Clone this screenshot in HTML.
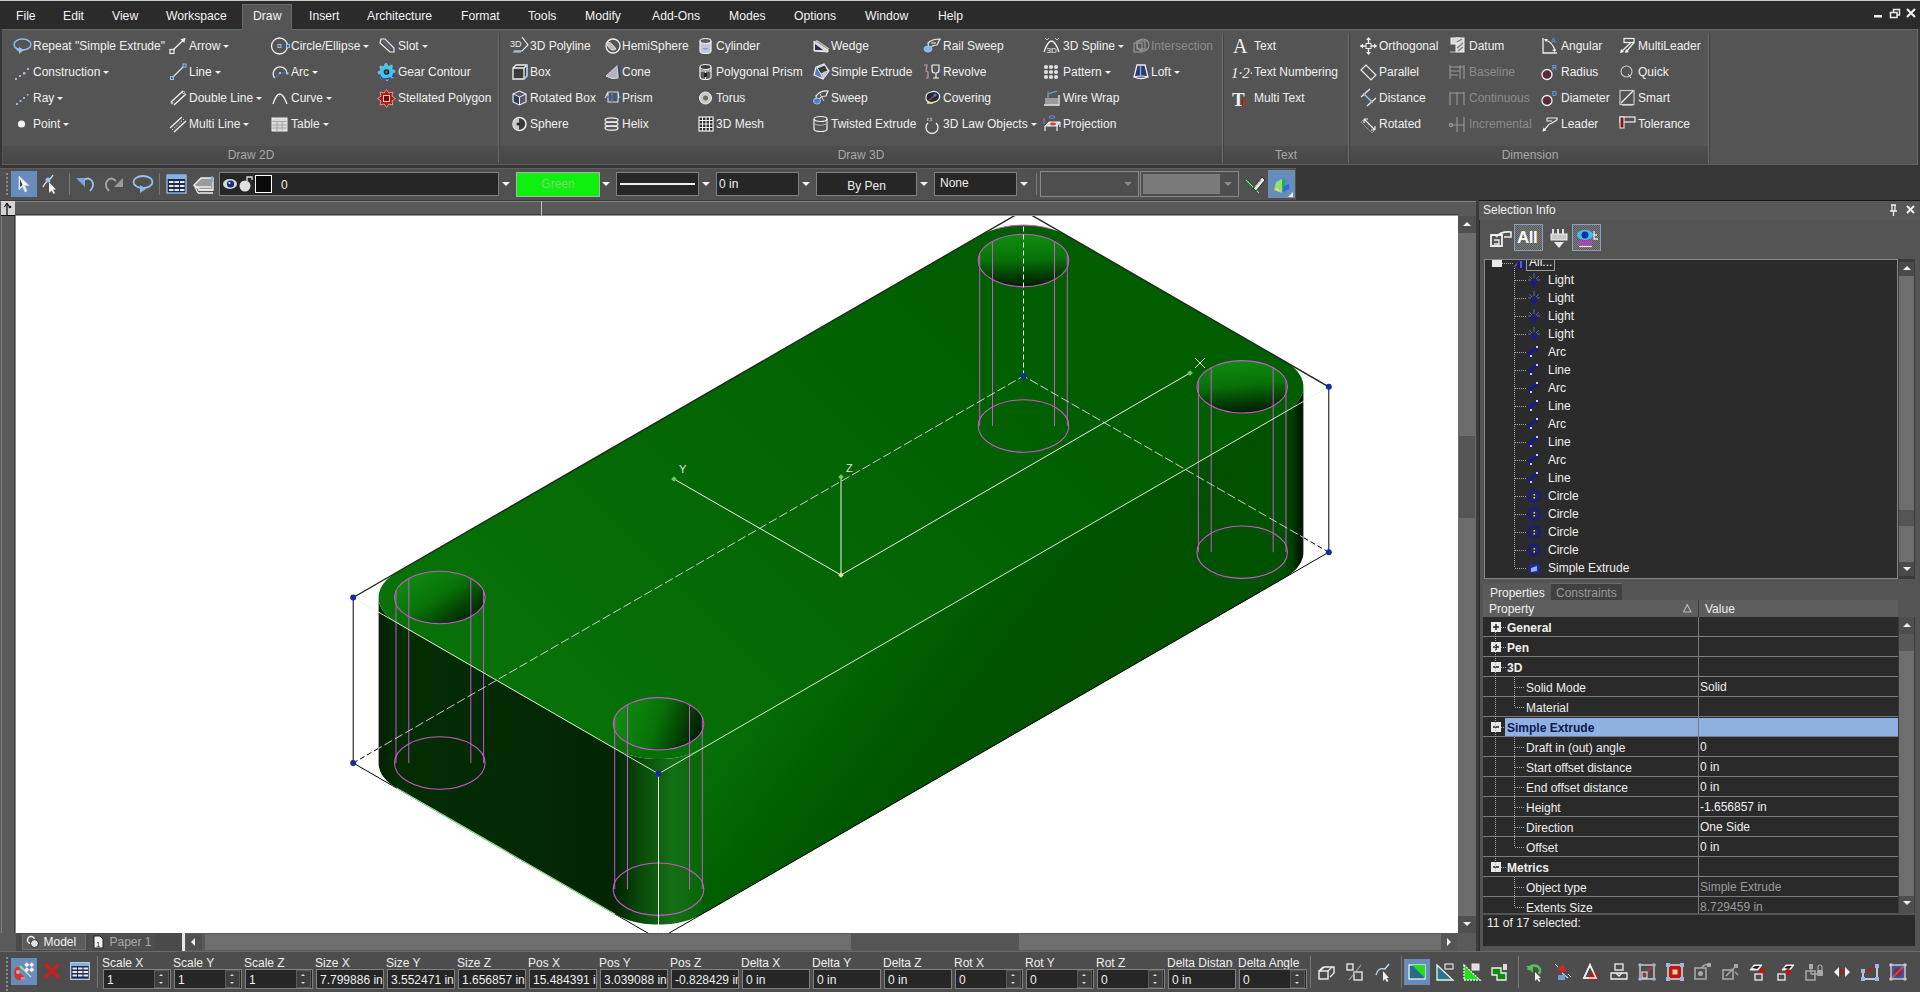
<!DOCTYPE html>
<html><head><meta charset="utf-8"><style>
html,body{margin:0;padding:0}
body{width:1920px;height:992px;overflow:hidden;position:relative;background:#3c3c3c;font-family:"Liberation Sans",sans-serif;}
body div, body svg, body span{position:absolute}
.t{white-space:nowrap;line-height:1}
.dd{width:0;height:0}
.tri{width:0;height:0;border-left:4px solid transparent;border-right:4px solid transparent;border-top:4px solid #f0f0f0}
.tri.s{border-left-width:3px;border-right-width:3px;border-top-width:3px}
.tri.up{border-top:none;border-bottom:4px solid #f0f0f0}
.tri.up.s{border-bottom-width:3px}
</style></head><body>
<div style="left:0px;top:0px;width:1920px;height:992px;background:#363636;"></div>
<div style="left:0px;top:0px;width:1920px;height:29px;background:#2b2b2b;"></div>
<div style="left:0px;top:0px;width:1920px;height:1px;background:#c8c8c8;"></div>
<div style="left:242px;top:4px;width:50px;height:25px;background:#555555;border:1px solid #6a6a6a;border-bottom:none;box-sizing:border-box;"></div>
<span class="t" style="left:16px;top:9.7px;font-size:12.2px;color:#f2f2f2;">File</span>
<span class="t" style="left:63px;top:9.7px;font-size:12.2px;color:#f2f2f2;">Edit</span>
<span class="t" style="left:112px;top:9.7px;font-size:12.2px;color:#f2f2f2;">View</span>
<span class="t" style="left:166px;top:9.7px;font-size:12.2px;color:#f2f2f2;">Workspace</span>
<span class="t" style="left:253px;top:9.7px;font-size:12.2px;color:#f2f2f2;">Draw</span>
<span class="t" style="left:309px;top:9.7px;font-size:12.2px;color:#f2f2f2;">Insert</span>
<span class="t" style="left:367px;top:9.7px;font-size:12.2px;color:#f2f2f2;">Architecture</span>
<span class="t" style="left:461px;top:9.7px;font-size:12.2px;color:#f2f2f2;">Format</span>
<span class="t" style="left:528px;top:9.7px;font-size:12.2px;color:#f2f2f2;">Tools</span>
<span class="t" style="left:585px;top:9.7px;font-size:12.2px;color:#f2f2f2;">Modify</span>
<span class="t" style="left:652px;top:9.7px;font-size:12.2px;color:#f2f2f2;">Add-Ons</span>
<span class="t" style="left:729px;top:9.7px;font-size:12.2px;color:#f2f2f2;">Modes</span>
<span class="t" style="left:794px;top:9.7px;font-size:12.2px;color:#f2f2f2;">Options</span>
<span class="t" style="left:865px;top:9.7px;font-size:12.2px;color:#f2f2f2;">Window</span>
<span class="t" style="left:938px;top:9.7px;font-size:12.2px;color:#f2f2f2;">Help</span>
<svg style="left:1870px;top:6px;" width="50" height="16" viewBox="0 0 50 16"><rect x="4" y="9" width="8" height="2.5" fill="#eee"/><path d="M23.5 6 V3.5 H29.5 V9 H27" fill="none" stroke="#eee" stroke-width="1.4"/><rect x="20.5" y="6.5" width="6.5" height="5" fill="none" stroke="#eee" stroke-width="1.5"/><path d="M37 3 l8 8 M45 3 l-8 8" stroke="#eee" stroke-width="2.2"/></svg>
<div style="left:2px;top:29px;width:1915px;height:135px;background:#545454;border-top:1px solid #6a6a6a;box-sizing:border-box;"></div>
<div style="left:3px;top:146px;width:1705px;height:18px;background:linear-gradient(#4e4e4e,#474747);"></div>
<div style="left:1917px;top:29px;width:1px;height:136px;background:#6a6a6a;"></div>
<div style="left:2px;top:164px;width:1916px;height:1px;background:#5e5e5e;"></div>
<div style="left:243px;top:28px;width:48px;height:3px;background:#555555;"></div>
<div style="left:498px;top:33px;width:1px;height:130px;background:#6c6c6c;"></div>
<div style="left:499px;top:33px;width:1px;height:130px;background:#424242;"></div>
<div style="left:1222px;top:33px;width:1px;height:130px;background:#6c6c6c;"></div>
<div style="left:1223px;top:33px;width:1px;height:130px;background:#424242;"></div>
<div style="left:1348px;top:33px;width:1px;height:130px;background:#6c6c6c;"></div>
<div style="left:1349px;top:33px;width:1px;height:130px;background:#424242;"></div>
<div style="left:1708px;top:33px;width:1px;height:130px;background:#6c6c6c;"></div>
<div style="left:1709px;top:33px;width:1px;height:130px;background:#424242;"></div>
<span class="t" style="left:191px;width:120px;text-align:center;top:149.3px;font-size:12px;color:#a8a8a8">Draw 2D</span>
<span class="t" style="left:801px;width:120px;text-align:center;top:149.3px;font-size:12px;color:#a8a8a8">Draw 3D</span>
<span class="t" style="left:1226px;width:120px;text-align:center;top:149.3px;font-size:12px;color:#a8a8a8">Text</span>
<span class="t" style="left:1470px;width:120px;text-align:center;top:149.3px;font-size:12px;color:#a8a8a8">Dimension</span>
<div style="left:0px;top:165px;width:1920px;height:3px;background:#363636;"></div>
<!--RIBBON-->
<span class="t" style="left:33px;top:40.3px;font-size:12px;color:#f0f0f0;">Repeat &quot;Simple Extrude&quot;</span>
<svg style="left:12px;top:36px;" width="20" height="20" viewBox="0 0 20 20"><ellipse cx="10.5" cy="8.5" rx="8.5" ry="5.5" fill="none" stroke="#9cc0ec" stroke-width="1.4"/><path d="M7 11 l5 3 l-5 4 z" fill="#9cc0ec"/><path d="M4 12 q2 3 4 3" stroke="#9cc0ec" stroke-width="1.4" fill="none"/></svg>
<span class="t" style="left:33px;top:66.3px;font-size:12px;color:#f0f0f0;">Construction</span>
<span class="tri s" style="left:103px;top:71px"></span>
<svg style="left:12px;top:62px;" width="20" height="20" viewBox="0 0 20 20"><g fill="#aab4d0"><rect x="3" y="16" width="2" height="2"/><rect x="7" y="13" width="2" height="2"/><rect x="11" y="10" width="2.5" height="2.5"/><rect x="15" y="6" width="2" height="2"/></g></svg>
<span class="t" style="left:33px;top:92.3px;font-size:12px;color:#f0f0f0;">Ray</span>
<span class="tri s" style="left:57px;top:97px"></span>
<svg style="left:12px;top:88px;" width="20" height="20" viewBox="0 0 20 20"><circle cx="7" cy="13" r="5.5" fill="none" stroke="#4a5470" stroke-width="1"/><g fill="#aab4d0"><rect x="4" y="15" width="2" height="2"/><rect x="7.5" y="12" width="2" height="2"/><rect x="11" y="9" width="2" height="2"/><rect x="15" y="6" width="1.5" height="1.5"/></g></svg>
<span class="t" style="left:33px;top:118.3px;font-size:12px;color:#f0f0f0;">Point</span>
<span class="tri s" style="left:63px;top:123px"></span>
<svg style="left:12px;top:114px;" width="20" height="20" viewBox="0 0 20 20"><circle cx="9.5" cy="10" r="3.6" fill="#f4f4f4"/></svg>
<span class="t" style="left:189px;top:40.3px;font-size:12px;color:#f0f0f0;">Arrow</span>
<span class="tri s" style="left:223px;top:45px"></span>
<svg style="left:168px;top:36px;" width="20" height="20" viewBox="0 0 20 20"><path d="M5 14 L17 2.5" stroke="#f0f0f0" stroke-width="1.3"/><path d="M17.5 2 l-5 1.2 l3.8 3.8 z" fill="#f0f0f0"/><rect x="2" y="13.5" width="4" height="4" fill="none" stroke="#f0f0f0" stroke-width="1.2"/></svg>
<span class="t" style="left:189px;top:66.3px;font-size:12px;color:#f0f0f0;">Line</span>
<span class="tri s" style="left:215px;top:71px"></span>
<svg style="left:168px;top:62px;" width="20" height="20" viewBox="0 0 20 20"><path d="M4.5 15.5 L16.5 3.5" stroke="#d8e4f4" stroke-width="1.3"/><rect x="2.5" y="14.5" width="3" height="3" fill="none" stroke="#9cc0ec" stroke-width="1"/><rect x="15" y="2" width="3" height="3" fill="#3a5aa0" stroke="#9cc0ec" stroke-width="1"/></svg>
<span class="t" style="left:189px;top:92.3px;font-size:12px;color:#f0f0f0;">Double Line</span>
<span class="tri s" style="left:256px;top:97px"></span>
<svg style="left:168px;top:88px;" width="20" height="20" viewBox="0 0 20 20"><path d="M3 14 L15 3 M6 17 L18 6" stroke="#f0f0f0" stroke-width="1.3"/><circle cx="15.5" cy="4.5" r="1.2" fill="none" stroke="#f0f0f0" stroke-width="0.8"/><circle cx="4" cy="15" r="1" fill="none" stroke="#f0f0f0" stroke-width="0.8"/></svg>
<span class="t" style="left:189px;top:118.3px;font-size:12px;color:#f0f0f0;">Multi Line</span>
<span class="tri s" style="left:243px;top:123px"></span>
<svg style="left:168px;top:114px;" width="20" height="20" viewBox="0 0 20 20"><path d="M2 14 L14 3 M6 18 L18 7" stroke="#f0f0f0" stroke-width="1.3"/><path d="M4 16 L16 5" stroke="#f0f0f0" stroke-width="1" stroke-dasharray="1.5,1.5"/></svg>
<span class="t" style="left:291px;top:40.3px;font-size:12px;color:#f0f0f0;">Circle/Ellipse</span>
<span class="tri s" style="left:363px;top:45px"></span>
<svg style="left:270px;top:36px;" width="20" height="20" viewBox="0 0 20 20"><circle cx="9.5" cy="10" r="8" fill="none" stroke="#f0f0f0" stroke-width="1.3"/><rect x="8" y="8.5" width="3" height="3" fill="none" stroke="#9cc0ec" stroke-width="1"/><rect x="16.5" y="8.5" width="3" height="3" fill="#3a5aa0" stroke="#9cc0ec" stroke-width="1"/></svg>
<span class="t" style="left:291px;top:66.3px;font-size:12px;color:#f0f0f0;">Arc</span>
<span class="tri s" style="left:312px;top:71px"></span>
<svg style="left:270px;top:62px;" width="20" height="20" viewBox="0 0 20 20"><path d="M4.5 16 A7 7 0 1 1 17 10.5" fill="none" stroke="#f0f0f0" stroke-width="1.3"/><path d="M5 16 L10 11 L17 11" stroke="#5a6ea0" stroke-width="1.2" fill="none"/><rect x="9" y="10" width="2" height="2" fill="#9cc0ec"/><rect x="16" y="10" width="2.5" height="2.5" fill="#9cc0ec"/></svg>
<span class="t" style="left:291px;top:92.3px;font-size:12px;color:#f0f0f0;">Curve</span>
<span class="tri s" style="left:326px;top:97px"></span>
<svg style="left:270px;top:88px;" width="20" height="20" viewBox="0 0 20 20"><path d="M3 16 Q9.5 -4 17 16" fill="none" stroke="#f0f0f0" stroke-width="1.3"/><rect x="8" y="7" width="2" height="2" fill="#5a6ea0"/></svg>
<span class="t" style="left:291px;top:118.3px;font-size:12px;color:#f0f0f0;">Table</span>
<span class="tri s" style="left:323px;top:123px"></span>
<svg style="left:270px;top:114px;" width="20" height="20" viewBox="0 0 20 20"><rect x="2" y="4" width="15" height="13" fill="#d8d8d8" stroke="#f0f0f0" stroke-width="1"/><path d="M2 7.5 H17 M2 11 H17 M2 14 H17 M7 7 V17 M12 7 V17" stroke="#a0a0a0" stroke-width="0.8"/></svg>
<span class="t" style="left:398px;top:40.3px;font-size:12px;color:#f0f0f0;">Slot</span>
<span class="tri s" style="left:422px;top:45px"></span>
<svg style="left:377px;top:36px;" width="20" height="20" viewBox="0 0 20 20"><path d="M4 3 L8 3 L17 12 L17 16 L13 16 L3 7 Z" fill="none" stroke="#f0f0f0" stroke-width="1.2" transform="rotate(0)"/><path d="M6 5 L14 13" stroke="#6a7aa0" stroke-width="1"/></svg>
<span class="t" style="left:398px;top:66.3px;font-size:12px;color:#f0f0f0;">Gear Contour</span>
<svg style="left:377px;top:62px;" width="20" height="20" viewBox="0 0 20 20"><g transform="translate(9.5 10) rotate(-10)"><polygon points="8.50,0.00 8.34,1.66 5.82,2.41 5.24,3.50 6.01,6.01 4.72,7.07 2.41,5.82 1.23,6.18 0.00,8.50 -1.66,8.34 -2.41,5.82 -3.50,5.24 -6.01,6.01 -7.07,4.72 -5.82,2.41 -6.18,1.23 -8.50,0.00 -8.34,-1.66 -5.82,-2.41 -5.24,-3.50 -6.01,-6.01 -4.72,-7.07 -2.41,-5.82 -1.23,-6.18 -0.00,-8.50 1.66,-8.34 2.41,-5.82 3.50,-5.24 6.01,-6.01 7.07,-4.72 5.82,-2.41 6.18,-1.23" fill="#40c4ec" stroke="#a8d0f8" stroke-width=".5"/><path d="M-6.5 1 A6.5 6.5 0 0 0 6.5 1 L7 6 L-7 6 Z" fill="#1a30b0" opacity=".9"/><circle r="2.8" fill="#222"/><circle r="1.4" fill="#5a6a7a"/></g></svg>
<span class="t" style="left:398px;top:92.3px;font-size:12px;color:#f0f0f0;">Stellated Polygon</span>
<svg style="left:377px;top:88px;" width="20" height="20" viewBox="0 0 20 20"><g transform="translate(9.5 10.5)"><polygon points="0,-9 2.3,-5.5 6.4,-6.4 5.5,-2.3 9,0 5.5,2.3 6.4,6.4 2.3,5.5 0,9 -2.3,5.5 -6.4,6.4 -5.5,2.3 -9,0 -5.5,-2.3 -6.4,-6.4 -2.3,-5.5" fill="#b01818" stroke="#ffb0a0" stroke-width=".8"/><rect x="-3" y="-3" width="6" height="6" fill="#6a1010" stroke="#ffd0c0" stroke-width="1"/></g></svg>
<span class="t" style="left:530px;top:40.3px;font-size:12px;color:#f0f0f0;">3D Polyline</span>
<svg style="left:510px;top:36px;" width="20" height="20" viewBox="0 0 20 20"><text x="0" y="11" font-family="Liberation Sans" font-size="9" fill="#f0f0f0">3D</text><path d="M12 1 L18 9 L12 15 L4 15" fill="none" stroke="#f0f0f0" stroke-width="1.2"/><path d="M3 16 L11 16" stroke="#9cc0ec" stroke-width="1.2"/></svg>
<span class="t" style="left:530px;top:66.3px;font-size:12px;color:#f0f0f0;">Box</span>
<svg style="left:510px;top:62px;" width="20" height="20" viewBox="0 0 20 20"><path d="M3 6 L6 3 L17 3 L17 14 L14 17 L3 17 Z M3 6 H14 V17 M14 6 L17 3" fill="#3a3a3a" stroke="#f0f0f0" stroke-width="1.3"/><path d="M17 3 V14 L14 17" stroke="#9cc0ec" stroke-width="1.3" fill="none"/></svg>
<span class="t" style="left:530px;top:92.3px;font-size:12px;color:#f0f0f0;">Rotated Box</span>
<svg style="left:510px;top:88px;" width="20" height="20" viewBox="0 0 20 20"><path d="M9.5 3 L16 6 L16 14 L9.5 17 L3 14 L3 6 Z" fill="#555a66" stroke="#f0f0f0" stroke-width="1.1"/><path d="M3 6 L9.5 9 L16 6 M9.5 9 V17" stroke="#f0f0f0" stroke-width="1" fill="none"/><path d="M4 7 L9 9.5 L9 16 L4 13.5 Z" fill="#2a3a60"/></svg>
<span class="t" style="left:530px;top:118.3px;font-size:12px;color:#f0f0f0;">Sphere</span>
<svg style="left:510px;top:114px;" width="20" height="20" viewBox="0 0 20 20"><circle cx="9.5" cy="10" r="6.5" fill="#3a3a3a" stroke="#f0f0f0" stroke-width="1.5"/><path d="M9 4 A6 6 0 0 0 9 16" fill="#c8c8c8"/><circle cx="8" cy="10" r="1.5" fill="#222"/></svg>
<span class="t" style="left:622px;top:40.3px;font-size:12px;color:#f0f0f0;">HemiSphere</span>
<svg style="left:602px;top:36px;" width="20" height="20" viewBox="0 0 20 20"><circle cx="11" cy="10" r="7" fill="none" stroke="#f0f0f0" stroke-width="1.3"/><path d="M4 7 Q8 4 14 13 Q9 17 4 7 Z" fill="#b8b8b8" stroke="#f0f0f0" stroke-width=".8"/></svg>
<span class="t" style="left:622px;top:66.3px;font-size:12px;color:#f0f0f0;">Cone</span>
<svg style="left:602px;top:62px;" width="20" height="20" viewBox="0 0 20 20"><path d="M16 3 L16 16 Q10 18 4 14 Z" fill="#b0b4bc" stroke="#d8dce4" stroke-width="1"/><path d="M16 3 L18 16" stroke="#2a3a60" stroke-width="1.2"/></svg>
<span class="t" style="left:622px;top:92.3px;font-size:12px;color:#f0f0f0;">Prism</span>
<svg style="left:602px;top:88px;" width="20" height="20" viewBox="0 0 20 20"><path d="M6 4 L16 4 L16 14 L6 14 Z M6 4 L3 10 M16 4 L17 10" fill="none" stroke="#d8e0f0" stroke-width="1.1"/><path d="M10 4 V14" stroke="#5a7ac0" stroke-width="1.4"/><path d="M5 9 H16" stroke="#3a5aa0" stroke-width="1"/></svg>
<span class="t" style="left:622px;top:118.3px;font-size:12px;color:#f0f0f0;">Helix</span>
<svg style="left:602px;top:114px;" width="20" height="20" viewBox="0 0 20 20"><g fill="none" stroke="#f0f0f0" stroke-width="1.3"><ellipse cx="9.5" cy="6" rx="6.5" ry="2.2"/><ellipse cx="9.5" cy="10" rx="6.5" ry="2.2"/><ellipse cx="9.5" cy="14" rx="6.5" ry="2.2"/></g></svg>
<span class="t" style="left:716px;top:40.3px;font-size:12px;color:#f0f0f0;">Cylinder</span>
<svg style="left:696px;top:36px;" width="20" height="20" viewBox="0 0 20 20"><path d="M4 5 V15 A5.5 2.5 0 0 0 15 15 V5" fill="#c0c8d8" stroke="#f0f0f0" stroke-width="1.2"/><ellipse cx="9.5" cy="5" rx="5.5" ry="2.5" fill="#5a5a5a" stroke="#f0f0f0" stroke-width="1.2"/><path d="M6 12 Q9 16 13 12" fill="#8aa8e0"/></svg>
<span class="t" style="left:716px;top:66.3px;font-size:12px;color:#f0f0f0;">Polygonal Prism</span>
<svg style="left:696px;top:62px;" width="20" height="20" viewBox="0 0 20 20"><path d="M4 5 V15 A5.5 2.5 0 0 0 15 15 V5" fill="#5a5a5a" stroke="#f0f0f0" stroke-width="1.2"/><ellipse cx="9.5" cy="5" rx="5.5" ry="2.5" fill="#3a3a3a" stroke="#f0f0f0" stroke-width="1.2"/><path d="M4 9 H15 M9.5 9 V17" stroke="#f0f0f0" stroke-width="1"/><rect x="8" y="11" width="3" height="4" fill="#222"/></svg>
<span class="t" style="left:716px;top:92.3px;font-size:12px;color:#f0f0f0;">Torus</span>
<svg style="left:696px;top:88px;" width="20" height="20" viewBox="0 0 20 20"><circle cx="9.5" cy="10" r="6" fill="#c8c8c8" stroke="#f0f0f0" stroke-width="1"/><circle cx="9.5" cy="10" r="2.5" fill="#6a6a6a"/></svg>
<span class="t" style="left:716px;top:118.3px;font-size:12px;color:#f0f0f0;">3D Mesh</span>
<svg style="left:696px;top:114px;" width="20" height="20" viewBox="0 0 20 20"><rect x="3" y="3" width="14" height="14" fill="#2a2a2a" stroke="#f0f0f0" stroke-width="1.2"/><path d="M3 6.5 H17 M3 10 H17 M3 13.5 H17 M6.5 3 V17 M10 3 V17 M13.5 3 V17" stroke="#f0f0f0" stroke-width="1.1"/></svg>
<span class="t" style="left:831px;top:40.3px;font-size:12px;color:#f0f0f0;">Wedge</span>
<svg style="left:811px;top:36px;" width="20" height="20" viewBox="0 0 20 20"><path d="M3 15 L3 5 L17 14 L17 16 Z" fill="#d8d8d8" stroke="#f0f0f0" stroke-width="1"/><path d="M4 7 L6 5 L18 13" stroke="#c8c8c8" stroke-width="1.5" fill="none"/><path d="M4 8 L4 14 L12 14 Z" fill="#2a2a4a"/></svg>
<span class="t" style="left:831px;top:66.3px;font-size:12px;color:#f0f0f0;">Simple Extrude</span>
<svg style="left:811px;top:62px;" width="20" height="20" viewBox="0 0 20 20"><path d="M5 5 L13 2 L18 9 L12 17 L3 13 Z" fill="#5a7ac0" stroke="#f0f0f0" stroke-width="1.2"/><path d="M6 6 L14 3 L17 9 L10 12 Z" fill="#3a3a3a" stroke="#f0f0f0" stroke-width="1"/><path d="M10 12 L12 17 M17 9 L18 9" stroke="#f0f0f0" stroke-width="1"/><path d="M12 10 L16 9 L14 15 L11 16 Z" fill="#c8c8c8"/></svg>
<span class="t" style="left:831px;top:92.3px;font-size:12px;color:#f0f0f0;">Sweep</span>
<svg style="left:811px;top:88px;" width="20" height="20" viewBox="0 0 20 20"><path d="M5 8 Q10 2 17 3 L15 8 Q9 8 6 14 Z" fill="none" stroke="#f0f0f0" stroke-width="1.2"/><ellipse cx="6" cy="13" rx="3.5" ry="3" fill="#5a7ad0" stroke="#9cc0ec" stroke-width="1"/><path d="M9 6 L13 13" stroke="#d0d0d0" stroke-width="1"/></svg>
<span class="t" style="left:831px;top:118.3px;font-size:12px;color:#f0f0f0;">Twisted Extrude</span>
<svg style="left:811px;top:114px;" width="20" height="20" viewBox="0 0 20 20"><path d="M3 5 V15 A6.5 2.5 0 0 0 16 15 V5" fill="none" stroke="#f0f0f0" stroke-width="1.2"/><ellipse cx="9.5" cy="5" rx="6.5" ry="2.5" fill="none" stroke="#f0f0f0" stroke-width="1.2"/><path d="M3 10 Q9.5 13 16 10" stroke="#b0b0b0" stroke-width="1" fill="none"/></svg>
<span class="t" style="left:943px;top:40.3px;font-size:12px;color:#f0f0f0;">Rail Sweep</span>
<svg style="left:922px;top:36px;" width="20" height="20" viewBox="0 0 20 20"><path d="M6 7 Q10 3 18 3 L15 9 Q10 9 7 13 Z" fill="none" stroke="#f0f0f0" stroke-width="1.2"/><ellipse cx="6" cy="13" rx="4" ry="3" fill="#8ab0e8" stroke="#9cc0ec" stroke-width="1"/><path d="M9 7 L14 7" stroke="#f0f0f0" stroke-width="1"/></svg>
<span class="t" style="left:943px;top:66.3px;font-size:12px;color:#f0f0f0;">Revolve</span>
<svg style="left:922px;top:62px;" width="20" height="20" viewBox="0 0 20 20"><path d="M2 3 H5 L4 9 L6 10 L6 16 L4 16" fill="none" stroke="#c8a0a0" stroke-width="1.1"/><path d="M10 3 H17 V8 Q17 11 14 11 V16 H11 M14 16 H17 M10 3 V8 Q10 11 13 11" fill="none" stroke="#f0f0f0" stroke-width="1.2"/></svg>
<span class="t" style="left:943px;top:92.3px;font-size:12px;color:#f0f0f0;">Covering</span>
<svg style="left:922px;top:88px;" width="20" height="20" viewBox="0 0 20 20"><path d="M4 11 Q3 5 9 4 Q14 2 17 6 Q19 10 15 13 Q9 16 5 13 Z" fill="#2a2a2a" stroke="#f0f0f0" stroke-width="1.2"/><path d="M5 15 L11 15" stroke="#e8e870" stroke-width="1.6"/><path d="M7 12 L14 7" stroke="#8a4a8a" stroke-width="1.2"/><circle cx="13" cy="7" r="1.6" fill="#4a7ae0"/></svg>
<span class="t" style="left:943px;top:118.3px;font-size:12px;color:#f0f0f0;">3D Law Objects</span>
<span class="tri s" style="left:1031px;top:123px"></span>
<svg style="left:922px;top:114px;" width="20" height="20" viewBox="0 0 20 20"><path d="M6 9 A6 6 0 1 0 14 9" fill="none" stroke="#f0f0f0" stroke-width="1.3"/><text x="5" y="7" font-family="Liberation Sans" font-size="6" fill="#f0f0f0">r,t</text></svg>
<span class="t" style="left:1063px;top:40.3px;font-size:12px;color:#f0f0f0;">3D Spline</span>
<span class="tri s" style="left:1118px;top:45px"></span>
<svg style="left:1042px;top:36px;" width="20" height="20" viewBox="0 0 20 20"><path d="M2 16 Q9.5 -6 17 16" fill="none" stroke="#f0f0f0" stroke-width="1.3"/><text x="4.5" y="17" font-family="Liberation Sans" font-size="8" fill="#f0f0f0">3D</text><path d="M3 2 l2 2 l2 -2 M13 2 l2 2 l2 -2" stroke="#c0c0c0" stroke-width="1" fill="none"/></svg>
<span class="t" style="left:1063px;top:66.3px;font-size:12px;color:#f0f0f0;">Pattern</span>
<span class="tri s" style="left:1105px;top:71px"></span>
<svg style="left:1042px;top:62px;" width="20" height="20" viewBox="0 0 20 20"><circle cx="4" cy="5" r="2.1" fill="#e0e0e0"/><circle cx="4" cy="10" r="2.1" fill="#e0e0e0"/><circle cx="4" cy="15" r="2.1" fill="#e0e0e0"/><circle cx="9" cy="5" r="2.1" fill="#e0e0e0"/><circle cx="9" cy="10" r="2.1" fill="#e0e0e0"/><circle cx="9" cy="15" r="2.1" fill="#e0e0e0"/><circle cx="14" cy="5" r="2.1" fill="#e0e0e0"/><circle cx="14" cy="10" r="2.1" fill="#e0e0e0"/><circle cx="14" cy="15" r="2.1" fill="#e0e0e0"/></svg>
<span class="t" style="left:1063px;top:92.3px;font-size:12px;color:#f0f0f0;">Wire Wrap</span>
<svg style="left:1042px;top:88px;" width="20" height="20" viewBox="0 0 20 20"><rect x="3" y="10" width="13" height="6" fill="#9a9a9a"/><path d="M2 17 H17 V7" stroke="#f0f0f0" stroke-width="1.3" fill="none"/><path d="M6 10 V6 L15 3" stroke="#4ac0d0" stroke-width="1.2" fill="none"/><path d="M6 6 L6 3" stroke="#c060c0" stroke-width="1"/></svg>
<span class="t" style="left:1063px;top:118.3px;font-size:12px;color:#f0f0f0;">Projection</span>
<svg style="left:1042px;top:114px;" width="20" height="20" viewBox="0 0 20 20"><path d="M3 12 L7 8 L18 8 L15 12 Z" fill="#d8d8d8" stroke="#f0f0f0" stroke-width="1"/><path d="M3 12 V17 M15 12 V17 M18 8 V13" stroke="#f0f0f0" stroke-width="1.2"/><ellipse cx="11" cy="10" rx="3" ry="1.4" fill="#d04040"/><ellipse cx="10" cy="3" rx="3" ry="1.3" fill="none" stroke="#6a8ad0" stroke-width="1"/><path d="M2 4 V10" stroke="#a0a0c0" stroke-width=".8"/></svg>
<span class="t" style="left:1151px;top:40.3px;font-size:12px;color:#8c8c8c;">Intersection</span>
<svg style="left:1131px;top:36px;" width="20" height="20" viewBox="0 0 20 20"><g fill="none" stroke="#9a9a9a" stroke-width="1.1"><rect x="3" y="7" width="8" height="9"/><rect x="6" y="5" width="8" height="8"/><circle cx="12" cy="9" r="6"/></g></svg>
<span class="t" style="left:1151px;top:66.3px;font-size:12px;color:#f0f0f0;">Loft</span>
<span class="tri s" style="left:1174px;top:71px"></span>
<svg style="left:1131px;top:62px;" width="20" height="20" viewBox="0 0 20 20"><path d="M6 3 H14 L17 15 Q10 18 3 15 Z" fill="#2a3a6a" stroke="#f0f0f0" stroke-width="1.3"/><path d="M3 15 Q10 13 17 15" stroke="#f0f0f0" stroke-width="1.2" fill="none"/><path d="M9.5 4 V15" stroke="#8ab0e0" stroke-width="1.4"/></svg>
<span class="t" style="left:1254px;top:40.3px;font-size:12px;color:#f0f0f0;">Text</span>
<svg style="left:1232px;top:36px;" width="20" height="20" viewBox="0 0 20 20"><text x="1" y="17" font-family="Liberation Serif" font-size="20" fill="#f0f0f0">A</text></svg>
<span class="t" style="left:1254px;top:66.3px;font-size:12px;color:#f0f0f0;">Text Numbering</span>
<svg style="left:1232px;top:62px;" width="20" height="20" viewBox="0 0 20 20"><text x="-1" y="16" font-family="Liberation Serif" font-style="italic" font-size="15" fill="#f0f0f0">1·2·3</text></svg>
<span class="t" style="left:1254px;top:92.3px;font-size:12px;color:#f0f0f0;">Multi Text</span>
<svg style="left:1232px;top:88px;" width="20" height="20" viewBox="0 0 20 20"><text x="0" y="18" font-family="Liberation Serif" font-weight="bold" font-size="19" fill="#f0f0f0">T</text><text x="9" y="19" font-family="Liberation Serif" font-size="16" fill="#c01818">r</text></svg>
<span class="t" style="left:1379px;top:40.3px;font-size:12px;color:#f0f0f0;">Orthogonal</span>
<svg style="left:1359px;top:36px;" width="20" height="20" viewBox="0 0 20 20"><g stroke="#f0f0f0" stroke-width="1.4" fill="none"><path d="M9.5 2 V18 M1.5 10 H17.5"/></g><g fill="#f0f0f0"><path d="M9.5 1 l-2.5 3 h5z M9.5 19 l-2.5 -3 h5z M1 10 l3 -2.5 v5z M18 10 l-3 -2.5 v5z"/></g><rect x="7" y="7.5" width="5" height="5" fill="#555" stroke="#f0f0f0" stroke-width="1"/></svg>
<span class="t" style="left:1379px;top:66.3px;font-size:12px;color:#f0f0f0;">Parallel</span>
<svg style="left:1359px;top:62px;" width="20" height="20" viewBox="0 0 20 20"><path d="M2 8 L7 3 L17 13 L12 18 Z" fill="none" stroke="#f0f0f0" stroke-width="1.2"/></svg>
<span class="t" style="left:1379px;top:92.3px;font-size:12px;color:#f0f0f0;">Distance</span>
<svg style="left:1359px;top:88px;" width="20" height="20" viewBox="0 0 20 20"><path d="M2 9 L11 1 M8 18 L17 10" stroke="#f0f0f0" stroke-width="1.3"/><path d="M5 6 L13 14" stroke="#9cc0ec" stroke-width="1.6"/><path d="M4 5 l3 0 l-2 3z M14 15 l-3 0 l2 -3z" fill="#9cc0ec"/></svg>
<span class="t" style="left:1379px;top:118.3px;font-size:12px;color:#f0f0f0;">Rotated</span>
<svg style="left:1359px;top:114px;" width="20" height="20" viewBox="0 0 20 20"><path d="M5 5 L16 16 M5 5 l0 4 M5 5 l4 0 M16 16 l0 -4 M16 16 l-4 0" stroke="#f0f0f0" stroke-width="1.2" fill="none"/><path d="M2 8 L5 5 M13 19 L16 16" stroke="#9a9a9a" stroke-width="1"/><path d="M2 8 L10 16 L13 19" stroke="#8a8a8a" stroke-width="1" fill="none"/></svg>
<span class="t" style="left:1469px;top:40.3px;font-size:12px;color:#f0f0f0;">Datum</span>
<svg style="left:1448px;top:36px;" width="20" height="20" viewBox="0 0 20 20"><rect x="8" y="2" width="8" height="14" fill="#d8d8d8" stroke="#f0f0f0" stroke-width="1"/><rect x="3" y="2" width="8" height="6" fill="#d8d8d8" stroke="#f0f0f0" stroke-width="1"/><path d="M9 6 L14 3 M9 12 L15 7 M10 15 L15 11" stroke="#7a7a7a" stroke-width="1.2"/><path d="M2 16 H8" stroke="#bbb" stroke-width="1"/></svg>
<span class="t" style="left:1469px;top:66.3px;font-size:12px;color:#8c8c8c;">Baseline</span>
<svg style="left:1448px;top:62px;" width="20" height="20" viewBox="0 0 20 20"><g stroke="#9a9a9a" stroke-width="1.1" fill="none"><path d="M2 3 V17 M16 3 V17 M12 3 V17 M2 5 H16 M2 9 H12 M2 13 H10"/></g></svg>
<span class="t" style="left:1469px;top:92.3px;font-size:12px;color:#8c8c8c;">Continuous</span>
<svg style="left:1448px;top:88px;" width="20" height="20" viewBox="0 0 20 20"><g stroke="#9a9a9a" stroke-width="1.1" fill="none"><path d="M2 4 V17 M9 4 V17 M16 4 V17 M2 5 H16"/></g></svg>
<span class="t" style="left:1469px;top:118.3px;font-size:12px;color:#8c8c8c;">Incremental</span>
<svg style="left:1448px;top:114px;" width="20" height="20" viewBox="0 0 20 20"><g stroke="#9a9a9a" stroke-width="1.1" fill="none"><path d="M9 3 V18 M16 3 V18 M3 11 H16"/><circle cx="3" cy="11" r="1.6"/></g></svg>
<span class="t" style="left:1561px;top:40.3px;font-size:12px;color:#f0f0f0;">Angular</span>
<svg style="left:1540px;top:36px;" width="20" height="20" viewBox="0 0 20 20"><path d="M3 2 V17 H17" stroke="#f0f0f0" stroke-width="1.3" fill="none"/><path d="M5 4 Q13 6 15 15" stroke="#f0f0f0" stroke-width="1.2" fill="none"/><path d="M4 3 l4 0 l-2 3z M15 16 l-3 -2 l4 -1z" fill="#f0f0f0"/><text x="11" y="7" font-family="Liberation Sans" font-size="7" font-weight="bold" fill="#5a8ad0">A</text></svg>
<span class="t" style="left:1561px;top:66.3px;font-size:12px;color:#f0f0f0;">Radius</span>
<svg style="left:1540px;top:62px;" width="20" height="20" viewBox="0 0 20 20"><circle cx="7" cy="12.5" r="5" fill="#5a2a3a" stroke="#f0f0f0" stroke-width="1.3"/><text x="12" y="8" font-family="Liberation Sans" font-size="7" font-weight="bold" fill="#6a9ae0">R</text></svg>
<span class="t" style="left:1561px;top:92.3px;font-size:12px;color:#f0f0f0;">Diameter</span>
<svg style="left:1540px;top:88px;" width="20" height="20" viewBox="0 0 20 20"><circle cx="7" cy="12.5" r="5" fill="#5a2a3a" stroke="#f0f0f0" stroke-width="1.3"/><text x="12" y="8" font-family="Liberation Sans" font-size="7" font-weight="bold" fill="#6a9ae0">D</text></svg>
<span class="t" style="left:1561px;top:118.3px;font-size:12px;color:#f0f0f0;">Leader</span>
<svg style="left:1540px;top:114px;" width="20" height="20" viewBox="0 0 20 20"><path d="M7 4 H17 V6 L12 9 Q8 10 7 13 L3 17" stroke="#f0f0f0" stroke-width="1.2" fill="none"/><path d="M2.5 17.5 l1 -4 l3 3z" fill="#f0f0f0"/><path d="M7 4 V7 H12" stroke="#f0f0f0" stroke-width="1.1" fill="none"/></svg>
<span class="t" style="left:1638px;top:40.3px;font-size:12px;color:#f0f0f0;">MultiLeader</span>
<svg style="left:1617px;top:36px;" width="20" height="20" viewBox="0 0 20 20"><rect x="7" y="2.5" width="10" height="4" fill="none" stroke="#f0f0f0" stroke-width="1.2"/><path d="M14 6.5 L4 16 M17 6.5 L9 16" stroke="#f0f0f0" stroke-width="1.2"/><path d="M3 17 l1 -4 l3 3z M8 17 l1 -4 l3 3z" fill="#f0f0f0"/></svg>
<span class="t" style="left:1638px;top:66.3px;font-size:12px;color:#f0f0f0;">Quick</span>
<svg style="left:1617px;top:62px;" width="20" height="20" viewBox="0 0 20 20"><circle cx="9.5" cy="9.5" r="5.5" fill="none" stroke="#d0d0d0" stroke-width="1.1"/><path d="M11 12 L14 16" stroke="#d0d0d0" stroke-width="1.1"/></svg>
<span class="t" style="left:1638px;top:92.3px;font-size:12px;color:#f0f0f0;">Smart</span>
<svg style="left:1617px;top:88px;" width="20" height="20" viewBox="0 0 20 20"><rect x="3" y="2.5" width="14" height="14" fill="none" stroke="#c8c8c8" stroke-width="1.2"/><path d="M4 15 L16 3" stroke="#f0f0f0" stroke-width="1.3"/><path d="M5 17 H16" stroke="#f0f0f0" stroke-width="1"/></svg>
<span class="t" style="left:1638px;top:118.3px;font-size:12px;color:#f0f0f0;">Tolerance</span>
<svg style="left:1617px;top:114px;" width="20" height="20" viewBox="0 0 20 20"><rect x="3" y="3" width="15" height="5" fill="none" stroke="#f0f0f0" stroke-width="1.2"/><rect x="3" y="3" width="4" height="11" fill="#7a1818" stroke="#f0f0f0" stroke-width="1"/></svg>
<div style="left:0px;top:168px;width:1296px;height:32px;background:#505050;border-top:1px solid #5e5e5e;box-sizing:border-box;"></div>
<!--TOOLBAR-->
<div style="left:6px;top:173px;width:2px;height:2px;background:#8a8a8a;"></div>
<div style="left:6px;top:177px;width:2px;height:2px;background:#8a8a8a;"></div>
<div style="left:6px;top:181px;width:2px;height:2px;background:#8a8a8a;"></div>
<div style="left:6px;top:185px;width:2px;height:2px;background:#8a8a8a;"></div>
<div style="left:6px;top:189px;width:2px;height:2px;background:#8a8a8a;"></div>
<div style="left:6px;top:193px;width:2px;height:2px;background:#8a8a8a;"></div>
<div style="left:11px;top:171px;width:26px;height:26px;background:#6a8cba;"></div>
<svg style="left:13px;top:173px;" width="22" height="22" viewBox="0 0 22 22"><path d="M6 3 L6 17 L9.5 13.5 L12 19 L14 18 L11.5 12.5 L16 12.5 Z" fill="#f4f4f4" stroke="#c8d8f0" stroke-width=".8"/><path d="M7 6 L7 14 L9.5 12" fill="#3a3a3a"/></svg>
<svg style="left:40px;top:173px;" width="22" height="22" viewBox="0 0 22 22"><path d="M3 14 Q6 8 11 5 L13 2" stroke="#e8e8e8" stroke-width="1.3" fill="none"/><circle cx="8" cy="7" r="2.5" fill="#9cc0ec"/><path d="M9 9 L9 20 L11.5 17.5 L13.5 21 L15 20 L13 16.5 L16 16.5 Z" fill="#f4f4f4"/></svg>
<svg style="left:74px;top:174px;" width="22" height="20" viewBox="0 0 22 20"><path d="M9 7 Q14 2 18 7 Q21 12 16 17" stroke="#9cc0ec" stroke-width="1.8" fill="none"/><path d="M2 4 L11 4 L11 13 Z" fill="#7aa8e0"/></svg>
<svg style="left:103px;top:174px;" width="22" height="20" viewBox="0 0 22 20"><path d="M13 7 Q8 2 4 7 Q1 12 6 17" stroke="#a8a8a8" stroke-width="1.8" fill="none"/><path d="M20 4 L11 13 L20 13 Z" fill="#9a9a9a"/></svg>
<svg style="left:131px;top:173px;" width="24" height="22" viewBox="0 0 24 22"><ellipse cx="12" cy="9" rx="9.5" ry="6" stroke="#9cc0ec" stroke-width="1.8" fill="none"/><path d="M9 12 L15 16 L9 20 Z" fill="#8ab8f0"/></svg>
<svg style="left:166px;top:174px;" width="21" height="20" viewBox="0 0 21 20"><rect x="1" y="1" width="19" height="18" fill="#1a2a50" stroke="#9cc0ec" stroke-width="1.3"/><rect x="1" y="1" width="19" height="4" fill="#8ab0e0"/><g fill="#e8e8e8"><rect x="3" y="7" width="4.5" height="2"/><rect x="8.5" y="7" width="4.5" height="2"/><rect x="14" y="7" width="4.5" height="2"/><rect x="3" y="11" width="4.5" height="2"/><rect x="8.5" y="11" width="4.5" height="2"/><rect x="14" y="11" width="4.5" height="2"/><rect x="3" y="15" width="4.5" height="2"/><rect x="8.5" y="15" width="4.5" height="2"/><rect x="14" y="15" width="4.5" height="2"/></g></svg>
<svg style="left:193px;top:174px;" width="22" height="20" viewBox="0 0 22 20"><path d="M1 11 L8 4 L20 4 L20 16 L7 16 Z" fill="#9a9a9a" stroke="#f0f0f0" stroke-width="1.3"/><path d="M3 13 L18 13 M5 16 H20 M5 19 H20 M1 11 L5 19" stroke="#f0f0f0" stroke-width="1.3" fill="none"/><path d="M19 2 V8" stroke="#7aa0d0" stroke-width="1.5"/></svg>
<svg style="left:1242px;top:171px;" width="24" height="26" viewBox="0 0 24 26"><path d="M4 9 L17 22" stroke="#2a8a2a" stroke-width="2.2"/><path d="M4 9 L17 22" stroke="#b8f0b8" stroke-width=".8"/><path d="M11 17 L20 6 L23 9 L14 20 Z" fill="#e8e8e8" stroke="#1a1a1a" stroke-width=".8"/><path d="M12 17 L19 9" stroke="#444" stroke-width="1" stroke-dasharray="1,1"/></svg>
<div style="left:69px;top:173px;width:1px;height:22px;background:#777;"></div>
<div style="left:159px;top:173px;width:1px;height:22px;background:#777;"></div>
<div style="left:219px;top:172px;width:280px;height:24px;background:#262626;border:1px solid #808080;box-sizing:border-box;"></div>
<div style="left:255px;top:175px;width:17px;height:18px;background:#0a0a0a;border:1px solid #fff;box-sizing:border-box;"></div>
<span class="t" style="left:281px;top:178.8px;font-size:12px;color:#eee;">0</span>
<svg style="left:222px;top:176px;" width="16" height="16" viewBox="0 0 16 16"><ellipse cx="8" cy="8" rx="7" ry="5" fill="#d8d8e0"/><circle cx="8.5" cy="8" r="3.6" fill="#1a2a80"/><circle cx="7.5" cy="7" r="1" fill="#fff"/></svg>
<svg style="left:238px;top:175px;" width="16" height="18" viewBox="0 0 16 18"><circle cx="7" cy="11" r="5.5" fill="#e0e0e0"/><path d="M9 6 V2 H14 V5" stroke="#e0e0e0" stroke-width="1.3" fill="none"/></svg>
<span class="tri" style="left:502px;top:182px;border-top-color:#f0f0f0"></span>
<div style="left:516px;top:172px;width:84px;height:25px;background:#0ef00e;border:1px solid #b0b0b0;box-sizing:border-box;"></div>
<span class="t" style="left:516px;width:84px;text-align:center;top:177.8px;font-size:12px;color:#7ad87a">Green</span>
<span class="tri" style="left:602px;top:182px;border-top-color:#f0f0f0"></span>
<div style="left:616px;top:172px;width:83px;height:24px;background:#262626;border:1px solid #808080;box-sizing:border-box;"></div>
<div style="left:620px;top:183px;width:75px;height:1.5px;background:#f0f0f0;"></div>
<span class="tri" style="left:702px;top:182px;border-top-color:#f0f0f0"></span>
<div style="left:716px;top:172px;width:83px;height:24px;background:#262626;border:1px solid #808080;box-sizing:border-box;"></div>
<span class="t" style="left:719px;top:177.8px;font-size:12px;color:#eee;">0 in</span>
<span class="tri" style="left:802px;top:182px;border-top-color:#f0f0f0"></span>
<div style="left:816px;top:172px;width:101px;height:24px;background:#262626;border:1px solid #808080;box-sizing:border-box;"></div>
<span class="t" style="left:816px;width:101px;text-align:center;top:179.8px;font-size:12px;color:#eee">By Pen</span>
<span class="tri" style="left:920px;top:182px;border-top-color:#f0f0f0"></span>
<div style="left:934px;top:172px;width:83px;height:24px;background:#262626;border:1px solid #808080;box-sizing:border-box;"></div>
<span class="t" style="left:940px;top:176.8px;font-size:12px;color:#eee;">None</span>
<span class="tri" style="left:1020px;top:182px;border-top-color:#f0f0f0"></span>
<div style="left:1036px;top:173px;width:1px;height:22px;background:#777;"></div>
<div style="left:1040px;top:171px;width:99px;height:26px;background:#4e4e4e;border:1px solid #8a8a8a;box-sizing:border-box;"></div>
<span class="tri" style="left:1124px;top:182px;border-top-color:#8a8a8a"></span>
<div style="left:1140px;top:171px;width:99px;height:26px;background:#4e4e4e;border:1px solid #8a8a8a;box-sizing:border-box;"></div>
<div style="left:1143px;top:174px;width:77px;height:20px;background:#7a7a7a;"></div>
<span class="tri" style="left:1224px;top:182px;border-top-color:#8a8a8a"></span>
<div style="left:1268px;top:170px;width:27px;height:28px;background:#6a8cba;"></div>
<svg style="left:1271px;top:174px;" width="22" height="22" viewBox="0 0 22 22"><ellipse cx="11" cy="11" rx="8" ry="8" fill="#5a8ad8"/><path d="M3 16 L5 8 L11 5 L11 19 Z" fill="#98e070"/><path d="M11 5 L15 6 L13 12 L11 19 Z" fill="#2aa84a"/><path d="M13 12 L18 10 L18 15 L12 18 Z" fill="#2a6ae0"/><path d="M4 16 L9 18 L6 13 Z" fill="#e0e070"/></svg>
<span style="left:1288px;top:192px;width:0;height:0;border-left:5px solid transparent;border-bottom:5px solid #f0f0f0"></span>
<div style="left:0px;top:200px;width:1476px;height:16px;background:#595959;"></div>
<div style="left:0px;top:200px;width:1476px;height:1px;background:#3a3a3a;"></div>
<div style="left:0px;top:201px;width:1476px;height:1px;background:#858585;"></div>
<div style="left:16px;top:214px;width:1442px;height:1px;background:#3c3c3c;"></div>
<div style="left:16px;top:215px;width:1442px;height:1px;background:#9a9a9a;"></div>
<div style="left:541px;top:201px;width:1px;height:15px;background:#c0c0c0;"></div>
<div style="left:0px;top:216px;width:16px;height:717px;background:#5a5a5a;border-right:1px solid #888;box-sizing:border-box;"></div>
<div style="left:1px;top:201px;width:14px;height:14px;background:#d4d4d4;"></div>
<svg style="left:1px;top:201px;" width="15" height="15" viewBox="0 0 15 15"><path d="M6 2.5 V14" stroke="#111" stroke-width="1.3"/><path d="M6 2 L3.5 6 M6 2 L8.5 6" stroke="#111" stroke-width="1.1"/><circle cx="9" cy="6" r="1.3" fill="#111"/><path d="M0 14.5 H14" stroke="#111" stroke-width="1"/></svg>
<div style="left:1px;top:216px;width:1px;height:717px;background:#808080;"></div>
<div style="left:14px;top:216px;width:1px;height:717px;background:#3e3e3e;"></div>
<div style="left:16px;top:216px;width:1442px;height:717px;background:#ffffff;"></div>
<svg style="left:16px;top:216px" width="1442" height="717" viewBox="16 216 1442 717"><defs>
<linearGradient id="gside" gradientUnits="userSpaceOnUse" x1="378.6" y1="0" x2="1303.4" y2="0"><stop offset="0.0000" stop-color="#0e1e0e"/><stop offset="0.0065" stop-color="#022402"/><stop offset="0.0194" stop-color="#032c03"/><stop offset="0.1376" stop-color="#032a03"/><stop offset="0.2558" stop-color="#022402"/><stop offset="0.2829" stop-color="#0a4a0a"/><stop offset="0.3185" stop-color="#157015"/><stop offset="0.3495" stop-color="#066606"/><stop offset="0.5117" stop-color="#006000"/><stop offset="0.6650" stop-color="#005600"/><stop offset="0.9806" stop-color="#004c00"/><stop offset="0.9893" stop-color="#003a00"/><stop offset="0.9968" stop-color="#001800"/><stop offset="1.0000" stop-color="#0a1a0a"/></linearGradient>
<linearGradient id="gtop" gradientUnits="userSpaceOnUse" x1="560" y1="720" x2="1000" y2="280"><stop offset="0" stop-color="#077107"/><stop offset="0.4" stop-color="#046804"/><stop offset="1" stop-color="#005d00"/></linearGradient>
<linearGradient id="gh0" x1="0.5" y1="0.05" x2="0.55" y2="1.0"><stop offset="0" stop-color="#0f8a0f"/><stop offset="0.45" stop-color="#087208"/><stop offset="0.75" stop-color="#034203"/><stop offset="1" stop-color="#001a00"/></linearGradient>
<linearGradient id="gh1" x1="0.1" y1="0.15" x2="0.95" y2="0.9"><stop offset="0" stop-color="#0f8a0f"/><stop offset="0.45" stop-color="#087208"/><stop offset="0.75" stop-color="#034203"/><stop offset="1" stop-color="#001a00"/></linearGradient>
<linearGradient id="gh2" x1="0.05" y1="0.4" x2="1.0" y2="0.6"><stop offset="0" stop-color="#0f8a0f"/><stop offset="0.45" stop-color="#087208"/><stop offset="0.75" stop-color="#034203"/><stop offset="1" stop-color="#001a00"/></linearGradient>
<linearGradient id="gh3" x1="0.45" y1="0.0" x2="0.6" y2="1.0"><stop offset="0" stop-color="#0f8a0f"/><stop offset="0.45" stop-color="#087208"/><stop offset="0.75" stop-color="#034203"/><stop offset="1" stop-color="#001a00"/></linearGradient>
<clipPath id="cbody"><polygon points="396.5,572.5 393.8,574.2 391.2,576.0 388.9,577.9 386.8,579.8 384.9,581.9 383.2,584.0 381.8,586.1 380.7,588.3 379.8,590.6 379.1,592.9 378.7,595.2 378.6,597.5 378.7,599.8 379.1,602.1 379.8,604.4 380.7,606.7 381.8,608.9 383.2,611.0 384.9,613.1 386.8,615.2 388.9,617.1 391.2,619.0 393.8,620.8 396.5,622.5 615.2,748.8 618.1,750.3 621.2,751.8 624.5,753.1 627.9,754.4 631.4,755.5 635.0,756.4 638.8,757.2 642.6,757.9 646.5,758.4 650.5,758.8 654.5,759.0 658.5,759.1 662.5,759.0 666.5,758.8 670.4,758.4 674.3,757.9 678.2,757.2 681.9,756.4 685.6,755.5 689.1,754.4 692.5,753.1 695.8,751.8 698.9,750.3 701.8,748.8 1285.5,411.8 1288.2,410.1 1290.7,408.3 1293.1,406.4 1295.2,404.4 1297.1,402.4 1298.7,400.3 1300.2,398.1 1301.3,395.9 1302.2,393.6 1302.9,391.4 1303.3,389.1 1303.4,386.8 1303.3,384.4 1302.9,382.1 1302.2,379.9 1301.3,377.6 1300.2,375.4 1298.7,373.2 1297.1,371.1 1295.2,369.1 1293.1,367.1 1290.7,365.2 1288.2,363.4 1285.5,361.8 1066.8,235.5 1063.9,233.9 1060.8,232.5 1057.5,231.1 1054.1,229.9 1050.6,228.8 1046.9,227.8 1043.2,227.0 1039.3,226.3 1035.4,225.8 1031.5,225.4 1027.5,225.2 1023.5,225.1 1019.5,225.2 1015.5,225.4 1011.6,225.8 1007.7,226.3 1003.8,227.0 1000.1,227.8 996.4,228.8 992.9,229.9 989.5,231.1 986.2,232.5 983.1,233.9 980.2,235.5"/><polygon points="378.6,597.5 378.7,599.8 379.1,602.1 379.8,604.4 380.7,606.7 381.8,608.9 383.2,611.0 384.9,613.1 386.8,615.2 388.9,617.1 391.2,619.0 393.8,620.8 396.5,622.5 615.2,748.8 618.1,750.3 621.2,751.8 624.5,753.1 627.9,754.4 631.4,755.5 635.0,756.4 638.8,757.2 642.6,757.9 646.5,758.4 650.5,758.8 654.5,759.0 658.5,759.1 662.5,759.0 666.5,758.8 670.4,758.4 674.3,757.9 678.2,757.2 681.9,756.4 685.6,755.5 689.1,754.4 692.5,753.1 695.8,751.8 698.9,750.3 701.8,748.8 1285.5,411.8 1288.2,410.1 1290.7,408.3 1293.1,406.4 1295.2,404.4 1297.1,402.4 1298.7,400.3 1300.2,398.1 1301.3,395.9 1302.2,393.6 1302.9,391.4 1303.3,389.1 1303.4,386.8 1303.4,552.2 1303.3,554.6 1302.9,556.9 1302.2,559.1 1301.3,561.4 1300.2,563.6 1298.7,565.8 1297.1,567.9 1295.2,569.9 1293.1,571.9 1290.7,573.8 1288.2,575.6 1285.5,577.2 701.8,914.2 698.9,915.8 695.8,917.3 692.5,918.6 689.1,919.9 685.6,921.0 681.9,921.9 678.2,922.7 674.3,923.4 670.4,923.9 666.5,924.3 662.5,924.5 658.5,924.6 654.5,924.5 650.5,924.3 646.5,923.9 642.6,923.4 638.8,922.7 635.0,921.9 631.4,921.0 627.9,919.9 624.5,918.6 621.2,917.3 618.1,915.8 615.2,914.2 396.5,788.0 393.8,786.3 391.2,784.5 388.9,782.6 386.8,780.7 384.9,778.6 383.2,776.5 381.8,774.4 380.7,772.2 379.8,769.9 379.1,767.6 378.7,765.3 378.6,763.0"/></clipPath>
<mask id="mout"><rect x="0" y="0" width="2000" height="1200" fill="#fff"/><polygon points="396.5,572.5 393.8,574.2 391.2,576.0 388.9,577.9 386.8,579.8 384.9,581.9 383.2,584.0 381.8,586.1 380.7,588.3 379.8,590.6 379.1,592.9 378.7,595.2 378.6,597.5 378.7,599.8 379.1,602.1 379.8,604.4 380.7,606.7 381.8,608.9 383.2,611.0 384.9,613.1 386.8,615.2 388.9,617.1 391.2,619.0 393.8,620.8 396.5,622.5 615.2,748.8 618.1,750.3 621.2,751.8 624.5,753.1 627.9,754.4 631.4,755.5 635.0,756.4 638.8,757.2 642.6,757.9 646.5,758.4 650.5,758.8 654.5,759.0 658.5,759.1 662.5,759.0 666.5,758.8 670.4,758.4 674.3,757.9 678.2,757.2 681.9,756.4 685.6,755.5 689.1,754.4 692.5,753.1 695.8,751.8 698.9,750.3 701.8,748.8 1285.5,411.8 1288.2,410.1 1290.7,408.3 1293.1,406.4 1295.2,404.4 1297.1,402.4 1298.7,400.3 1300.2,398.1 1301.3,395.9 1302.2,393.6 1302.9,391.4 1303.3,389.1 1303.4,386.8 1303.3,384.4 1302.9,382.1 1302.2,379.9 1301.3,377.6 1300.2,375.4 1298.7,373.2 1297.1,371.1 1295.2,369.1 1293.1,367.1 1290.7,365.2 1288.2,363.4 1285.5,361.8 1066.8,235.5 1063.9,233.9 1060.8,232.5 1057.5,231.1 1054.1,229.9 1050.6,228.8 1046.9,227.8 1043.2,227.0 1039.3,226.3 1035.4,225.8 1031.5,225.4 1027.5,225.2 1023.5,225.1 1019.5,225.2 1015.5,225.4 1011.6,225.8 1007.7,226.3 1003.8,227.0 1000.1,227.8 996.4,228.8 992.9,229.9 989.5,231.1 986.2,232.5 983.1,233.9 980.2,235.5" fill="#000"/><polygon points="378.6,597.5 378.7,599.8 379.1,602.1 379.8,604.4 380.7,606.7 381.8,608.9 383.2,611.0 384.9,613.1 386.8,615.2 388.9,617.1 391.2,619.0 393.8,620.8 396.5,622.5 615.2,748.8 618.1,750.3 621.2,751.8 624.5,753.1 627.9,754.4 631.4,755.5 635.0,756.4 638.8,757.2 642.6,757.9 646.5,758.4 650.5,758.8 654.5,759.0 658.5,759.1 662.5,759.0 666.5,758.8 670.4,758.4 674.3,757.9 678.2,757.2 681.9,756.4 685.6,755.5 689.1,754.4 692.5,753.1 695.8,751.8 698.9,750.3 701.8,748.8 1285.5,411.8 1288.2,410.1 1290.7,408.3 1293.1,406.4 1295.2,404.4 1297.1,402.4 1298.7,400.3 1300.2,398.1 1301.3,395.9 1302.2,393.6 1302.9,391.4 1303.3,389.1 1303.4,386.8 1303.4,552.2 1303.3,554.6 1302.9,556.9 1302.2,559.1 1301.3,561.4 1300.2,563.6 1298.7,565.8 1297.1,567.9 1295.2,569.9 1293.1,571.9 1290.7,573.8 1288.2,575.6 1285.5,577.2 701.8,914.2 698.9,915.8 695.8,917.3 692.5,918.6 689.1,919.9 685.6,921.0 681.9,921.9 678.2,922.7 674.3,923.4 670.4,923.9 666.5,924.3 662.5,924.5 658.5,924.6 654.5,924.5 650.5,924.3 646.5,923.9 642.6,923.4 638.8,922.7 635.0,921.9 631.4,921.0 627.9,919.9 624.5,918.6 621.2,917.3 618.1,915.8 615.2,914.2 396.5,788.0 393.8,786.3 391.2,784.5 388.9,782.6 386.8,780.7 384.9,778.6 383.2,776.5 381.8,774.4 380.7,772.2 379.8,769.9 379.1,767.6 378.7,765.3 378.6,763.0" fill="#000"/></mask>
</defs>
<polygon points="378.6,597.5 378.7,599.8 379.1,602.1 379.8,604.4 380.7,606.7 381.8,608.9 383.2,611.0 384.9,613.1 386.8,615.2 388.9,617.1 391.2,619.0 393.8,620.8 396.5,622.5 615.2,748.8 618.1,750.3 621.2,751.8 624.5,753.1 627.9,754.4 631.4,755.5 635.0,756.4 638.8,757.2 642.6,757.9 646.5,758.4 650.5,758.8 654.5,759.0 658.5,759.1 662.5,759.0 666.5,758.8 670.4,758.4 674.3,757.9 678.2,757.2 681.9,756.4 685.6,755.5 689.1,754.4 692.5,753.1 695.8,751.8 698.9,750.3 701.8,748.8 1285.5,411.8 1288.2,410.1 1290.7,408.3 1293.1,406.4 1295.2,404.4 1297.1,402.4 1298.7,400.3 1300.2,398.1 1301.3,395.9 1302.2,393.6 1302.9,391.4 1303.3,389.1 1303.4,386.8 1303.4,552.2 1303.3,554.6 1302.9,556.9 1302.2,559.1 1301.3,561.4 1300.2,563.6 1298.7,565.8 1297.1,567.9 1295.2,569.9 1293.1,571.9 1290.7,573.8 1288.2,575.6 1285.5,577.2 701.8,914.2 698.9,915.8 695.8,917.3 692.5,918.6 689.1,919.9 685.6,921.0 681.9,921.9 678.2,922.7 674.3,923.4 670.4,923.9 666.5,924.3 662.5,924.5 658.5,924.6 654.5,924.5 650.5,924.3 646.5,923.9 642.6,923.4 638.8,922.7 635.0,921.9 631.4,921.0 627.9,919.9 624.5,918.6 621.2,917.3 618.1,915.8 615.2,914.2 396.5,788.0 393.8,786.3 391.2,784.5 388.9,782.6 386.8,780.7 384.9,778.6 383.2,776.5 381.8,774.4 380.7,772.2 379.8,769.9 379.1,767.6 378.7,765.3 378.6,763.0" fill="url(#gside)"/>
<linearGradient id="grf" gradientUnits="userSpaceOnUse" x1="701.8" y1="748.8" x2="973.8" y2="952.8"><stop offset="0" stop-color="#077007"/><stop offset="0.3" stop-color="#005f00"/><stop offset="0.55" stop-color="#005300"/><stop offset="0.75" stop-color="#005000"/><stop offset="1" stop-color="#005200"/></linearGradient>
<polygon points="701.8,748.8 1285.5,411.8 1285.5,577.2 701.8,914.2" fill="url(#grf)"/>
<polygon points="396.5,572.5 393.8,574.2 391.2,576.0 388.9,577.9 386.8,579.8 384.9,581.9 383.2,584.0 381.8,586.1 380.7,588.3 379.8,590.6 379.1,592.9 378.7,595.2 378.6,597.5 378.7,599.8 379.1,602.1 379.8,604.4 380.7,606.7 381.8,608.9 383.2,611.0 384.9,613.1 386.8,615.2 388.9,617.1 391.2,619.0 393.8,620.8 396.5,622.5 615.2,748.8 618.1,750.3 621.2,751.8 624.5,753.1 627.9,754.4 631.4,755.5 635.0,756.4 638.8,757.2 642.6,757.9 646.5,758.4 650.5,758.8 654.5,759.0 658.5,759.1 662.5,759.0 666.5,758.8 670.4,758.4 674.3,757.9 678.2,757.2 681.9,756.4 685.6,755.5 689.1,754.4 692.5,753.1 695.8,751.8 698.9,750.3 701.8,748.8 1285.5,411.8 1288.2,410.1 1290.7,408.3 1293.1,406.4 1295.2,404.4 1297.1,402.4 1298.7,400.3 1300.2,398.1 1301.3,395.9 1302.2,393.6 1302.9,391.4 1303.3,389.1 1303.4,386.8 1303.3,384.4 1302.9,382.1 1302.2,379.9 1301.3,377.6 1300.2,375.4 1298.7,373.2 1297.1,371.1 1295.2,369.1 1293.1,367.1 1290.7,365.2 1288.2,363.4 1285.5,361.8 1066.8,235.5 1063.9,233.9 1060.8,232.5 1057.5,231.1 1054.1,229.9 1050.6,228.8 1046.9,227.8 1043.2,227.0 1039.3,226.3 1035.4,225.8 1031.5,225.4 1027.5,225.2 1023.5,225.1 1019.5,225.2 1015.5,225.4 1011.6,225.8 1007.7,226.3 1003.8,227.0 1000.1,227.8 996.4,228.8 992.9,229.9 989.5,231.1 986.2,232.5 983.1,233.9 980.2,235.5" fill="url(#gtop)"/>
<ellipse cx="1023.5" cy="260.5" rx="45.3" ry="26.2" fill="url(#gh0)"/>
<ellipse cx="439.8" cy="597.5" rx="45.3" ry="26.2" fill="url(#gh1)"/>
<ellipse cx="658.5" cy="723.8" rx="45.3" ry="26.2" fill="url(#gh2)"/>
<ellipse cx="1242.2" cy="386.8" rx="45.3" ry="26.2" fill="url(#gh3)"/>
<polyline points="1049.4,228.5 1045.3,227.5 1041.1,226.6 1036.8,226.0 1032.4,225.5 1027.9,225.2 1023.5,225.1 1019.1,225.2 1014.6,225.5 1010.2,226.0 1005.9,226.6 1001.7,227.5 997.6,228.5" fill="none" stroke="#c658cc" stroke-width="1"/>
<ellipse cx="1023.5" cy="260.5" rx="45.3" ry="26.2" fill="none" stroke="#c658cc" stroke-width="1.1"/>
<ellipse cx="1023.5" cy="426.0" rx="45.3" ry="26.2" fill="none" stroke="#c658cc" stroke-width="1.1"/>
<line x1="979.7" y1="253.8" x2="979.7" y2="426.0" stroke="#c658cc" stroke-width="1"/>
<line x1="992.5" y1="241.4" x2="992.5" y2="426.0" stroke="#c658cc" stroke-width="1"/>
<line x1="1054.5" y1="241.4" x2="1054.5" y2="426.0" stroke="#c658cc" stroke-width="1"/>
<line x1="1067.3" y1="253.8" x2="1067.3" y2="426.0" stroke="#c658cc" stroke-width="1"/>
<ellipse cx="439.8" cy="597.5" rx="45.3" ry="26.2" fill="none" stroke="#c658cc" stroke-width="1.1"/>
<ellipse cx="439.8" cy="763.0" rx="45.3" ry="26.2" fill="none" stroke="#c658cc" stroke-width="1.1"/>
<line x1="396.0" y1="590.8" x2="396.0" y2="763.0" stroke="#c658cc" stroke-width="1"/>
<line x1="408.8" y1="578.4" x2="408.8" y2="763.0" stroke="#c658cc" stroke-width="1"/>
<line x1="470.8" y1="578.4" x2="470.8" y2="763.0" stroke="#c658cc" stroke-width="1"/>
<line x1="483.6" y1="590.8" x2="483.6" y2="763.0" stroke="#c658cc" stroke-width="1"/>
<ellipse cx="658.5" cy="723.8" rx="45.3" ry="26.2" fill="none" stroke="#c658cc" stroke-width="1.1"/>
<ellipse cx="658.5" cy="889.2" rx="45.3" ry="26.2" fill="none" stroke="#c658cc" stroke-width="1.1"/>
<line x1="614.7" y1="717.1" x2="614.7" y2="889.2" stroke="#c658cc" stroke-width="1"/>
<line x1="627.5" y1="704.7" x2="627.5" y2="889.2" stroke="#c658cc" stroke-width="1"/>
<line x1="689.5" y1="704.7" x2="689.5" y2="889.2" stroke="#c658cc" stroke-width="1"/>
<line x1="702.3" y1="717.1" x2="702.3" y2="889.2" stroke="#c658cc" stroke-width="1"/>
<ellipse cx="1242.2" cy="386.8" rx="45.3" ry="26.2" fill="none" stroke="#c658cc" stroke-width="1.1"/>
<ellipse cx="1242.2" cy="552.2" rx="45.3" ry="26.2" fill="none" stroke="#c658cc" stroke-width="1.1"/>
<line x1="1198.4" y1="380.1" x2="1198.4" y2="552.2" stroke="#c658cc" stroke-width="1"/>
<line x1="1211.2" y1="367.7" x2="1211.2" y2="552.2" stroke="#c658cc" stroke-width="1"/>
<line x1="1273.2" y1="367.7" x2="1273.2" y2="552.2" stroke="#c658cc" stroke-width="1"/>
<line x1="1286.0" y1="380.1" x2="1286.0" y2="552.2" stroke="#c658cc" stroke-width="1"/>
<line x1="1023.5" y1="210.5" x2="353.2" y2="597.5" stroke="#1a2a1a" stroke-width="1.4"/>
<line x1="1023.5" y1="210.5" x2="1328.8" y2="386.8" stroke="#1a2a1a" stroke-width="1.4"/>
<line x1="353.2" y1="597.5" x2="353.2" y2="763.0" stroke="#000" stroke-width="1"/>
<line x1="1328.8" y1="386.8" x2="1328.8" y2="552.2" stroke="#000" stroke-width="1"/>
<line x1="353.2" y1="763.0" x2="658.5" y2="939.2" stroke="#000" stroke-width="1" mask="url(#mout)"/>
<line x1="1328.8" y1="552.2" x2="658.5" y2="939.2" stroke="#000" stroke-width="1"/>
<line x1="396.5" y1="788.0" x2="615.2" y2="914.2" stroke="#8ae08a" stroke-width="1.1"/>
<line x1="353.2" y1="597.5" x2="658.5" y2="773.8" stroke="#e8f8e0" stroke-width="0.9"/>
<line x1="1328.8" y1="386.8" x2="658.5" y2="773.8" stroke="#e8f8e0" stroke-width="0.9"/>
<line x1="658.5" y1="773.8" x2="658.5" y2="939.2" stroke="#e8ffe8" stroke-width="1"/>
<line x1="353.2" y1="763.0" x2="1023.5" y2="376.0" stroke="#000" stroke-width="1" stroke-dasharray="5,3" mask="url(#mout)"/>
<line x1="353.2" y1="763.0" x2="1023.5" y2="376.0" stroke="#e8d8e8" stroke-width="0.9" stroke-dasharray="9,3" clip-path="url(#cbody)"/>
<line x1="1328.8" y1="552.2" x2="1023.5" y2="376.0" stroke="#000" stroke-width="1" stroke-dasharray="5,3" mask="url(#mout)"/>
<line x1="1328.8" y1="552.2" x2="1023.5" y2="376.0" stroke="#e8d8e8" stroke-width="0.9" stroke-dasharray="9,3" clip-path="url(#cbody)"/>
<line x1="1023.5" y1="210.5" x2="1023.5" y2="376.0" stroke="#000" stroke-width="1" stroke-dasharray="5,3" mask="url(#mout)"/>
<line x1="1023.5" y1="210.5" x2="1023.5" y2="376.0" stroke="#f0fff0" stroke-width="1" stroke-dasharray="5,3" clip-path="url(#cbody)"/>
<line x1="841.0" y1="575.0" x2="674.0" y2="479.0" stroke="#f0f0f0" stroke-width="1"/>
<line x1="841.0" y1="575.0" x2="841.0" y2="478.0" stroke="#f0f0f0" stroke-width="1"/>
<line x1="841.0" y1="575.0" x2="1190.0" y2="373.0" stroke="#f0f0f0" stroke-width="1"/>
<rect x="672" y="477" width="4" height="4" fill="#5fd05f" transform="rotate(45 674 479)"/>
<rect x="839" y="475" width="4" height="4" fill="#5fd05f" transform="rotate(45 841 477)"/>
<rect x="1188" y="371" width="4" height="4" fill="#5fd05f" transform="rotate(45 1190 373)"/>
<rect x="839" y="573" width="4" height="4" fill="#f0e0a0" transform="rotate(45 841 575)"/>
<text x="679" y="473" font-size="11" fill="#e0e0e0" font-family="Liberation Sans">Y</text>
<text x="846" y="472" font-size="11" fill="#e0e0e0" font-family="Liberation Sans">Z</text>
<line x1="1195.0" y1="358.0" x2="1205.0" y2="368.0" stroke="#e0e0e0" stroke-width="1"/>
<line x1="1205.0" y1="358.0" x2="1195.0" y2="368.0" stroke="#e0e0e0" stroke-width="1"/>
<circle cx="353.2" cy="597.5" r="3" fill="#1a2a9a"/>
<circle cx="353.2" cy="763.0" r="3" fill="#1a2a9a"/>
<circle cx="1328.8" cy="386.8" r="3" fill="#1a2a9a"/>
<circle cx="1328.8" cy="552.2" r="3" fill="#1a2a9a"/>
<circle cx="658.5" cy="773.8" r="3" fill="#1a2a9a"/>
<circle cx="1023.5" cy="376.0" r="3" fill="#1a2a9a"/></svg>
<div style="left:1458px;top:216px;width:18px;height:717px;background:#6c6c6c;"></div>
<div style="left:1458px;top:216px;width:18px;height:17px;background:#505050;"></div>
<div style="left:1458px;top:916px;width:18px;height:17px;background:#505050;"></div>
<div style="left:1459px;top:436px;width:16px;height:82px;background:#555;"></div>
<span class="tri up" style="left:1463px;top:222px"></span>
<span class="tri" style="left:1463px;top:922px;border-top-color:#f0f0f0"></span>
<div style="left:0px;top:933px;width:1476px;height:18px;background:#5a5a5a;"></div>
<div style="left:16px;top:933px;width:167px;height:18px;background:#4a4a4a;"></div>
<div style="left:22px;top:934px;width:64px;height:16px;background:#5c5c5c;border:1px solid #6e6e6e;border-top:none;box-sizing:border-box;"></div>
<div style="left:88px;top:934px;width:67px;height:16px;background:#4e4e4e;"></div>
<svg style="left:26px;top:935px;" width="14" height="14" viewBox="0 0 14 14"><circle cx="5" cy="5" r="3.5" fill="none" stroke="#f0f0f0" stroke-width="1.5"/><circle cx="8.5" cy="8.5" r="4" fill="#e0e0e0" stroke="#222" stroke-width="1"/></svg>
<svg style="left:93px;top:935px;" width="12" height="14" viewBox="0 0 12 14"><path d="M1 1 H7 L10 4 V13 H1 Z" fill="#f4f4f4" stroke="#222" stroke-width="1"/><text x="3" y="12" font-size="8" font-family="Liberation Sans" fill="#222">1</text></svg>
<span class="t" style="left:43.5px;top:936.3px;font-size:12px;color:#f0f0f0;">Model</span>
<span class="t" style="left:109.5px;top:936.3px;font-size:12px;color:#a8a8a8;">Paper 1</span>
<div style="left:182px;top:933px;width:3px;height:18px;background:#e8e8e8;"></div>
<div style="left:186px;top:934px;width:16px;height:16px;background:#505050;"></div>
<span style="left:191px;top:938px;width:0;height:0;border-top:4px solid transparent;border-bottom:4px solid transparent;border-right:4px solid #f0f0f0"></span>
<div style="left:205px;top:934px;width:1236px;height:16px;background:#6e6e6e;"></div>
<div style="left:851px;top:934px;width:168px;height:16px;background:#555;"></div>
<div style="left:1441px;top:934px;width:16px;height:16px;background:#555;"></div>
<span style="left:1447px;top:938px;width:0;height:0;border-top:4px solid transparent;border-bottom:4px solid transparent;border-left:4px solid #f0f0f0"></span>
<div style="left:1458px;top:933px;width:18px;height:18px;background:#5a5a5a;"></div>
<!--PANEL-->
<div style="left:1476px;top:200px;width:3px;height:751px;background:#3a3a3a;"></div>
<div style="left:1479px;top:200px;width:441px;height:751px;background:#545454;border-left:1px solid #2a2a2a;box-sizing:border-box;"></div>
<div style="left:1479px;top:200px;width:441px;height:20px;background:#575757;border-top:1px solid #151515;box-sizing:border-box;"></div>
<span class="t" style="left:1483px;top:204.3px;font-size:12px;color:#f0f0f0;">Selection Info</span>
<div style="left:1514px;top:224px;width:29px;height:27px;background:repeating-conic-gradient(#7a7a7a 0 25%, #5a5a5a 0 50%) 0 0/2px 2px;border:1px solid #8aa0c0;box-sizing:border-box;"></div>
<span class="t" style="left:1517px;top:229px;font-size:17px;font-weight:bold;color:#f8f8f8;letter-spacing:-0.5px">All</span>
<div style="left:1572px;top:224px;width:29px;height:27px;background:repeating-conic-gradient(#7a7a7a 0 25%, #5a5a5a 0 50%) 0 0/2px 2px;border:1px solid #8aa0c0;box-sizing:border-box;"></div>
<svg style="left:1489px;top:228px;" width="24" height="20" viewBox="0 0 24 20"><path d="M2 7 H13 V18 H2 Z" fill="none" stroke="#f0f0f0" stroke-width="1.8"/><path d="M5 12 H10 V16 H5" stroke="#f0f0f0" stroke-width="1.3" fill="none"/><path d="M7 9 Q12 3 22 4 V9 H15" stroke="#f0f0f0" stroke-width="1.6" fill="none"/></svg>
<svg style="left:1549px;top:226px;" width="20" height="24" viewBox="0 0 20 24"><rect x="2" y="8" width="16" height="6" fill="#c8c8c8" stroke="#f0f0f0" stroke-width="1"/><path d="M4 8 V3 M9 8 V3 M14 8 V3" stroke="#f0f0f0" stroke-width="1.8"/><path d="M5 16 H15 L10 22 Z" fill="#f0f0f0"/></svg>
<svg style="left:1574px;top:226px;" width="26" height="24" viewBox="0 0 26 24"><ellipse cx="11" cy="9" rx="8" ry="5" fill="#40c0f0"/><circle cx="11" cy="9" r="3.5" fill="#1a2aa0"/><rect x="4" y="15" width="14" height="4" fill="#b040c0"/><path d="M5 20.5 H18" stroke="#e8e8e8" stroke-width="1.2"/><path d="M20 5 V13 H24 M20 9 H23" stroke="#e8e8e8" stroke-width="1.3" fill="none"/></svg>
<svg style="left:1886px;top:203px;" width="34" height="14" viewBox="0 0 34 14"><path d="M5 2 h5 M6 2 v6 M9 2 v6 M4 8 h7 M7.5 8 v5" stroke="#eee" stroke-width="1.3" fill="none"/><path d="M21 3 l7 7 M28 3 l-7 7" stroke="#eee" stroke-width="2"/></svg>
<div style="left:1484px;top:259px;width:414px;height:320px;background:#2b2b2b;border:1px solid #888;box-sizing:border-box;"></div>
<div style="left:1898px;top:259px;width:17px;height:320px;background:#3a3a3a;"></div>
<div style="left:1899px;top:262px;width:15px;height:314px;background:#6e6e6e;"></div>
<div style="left:1899px;top:510px;width:15px;height:16px;background:#555555;"></div>
<div style="left:1899px;top:262px;width:15px;height:14px;background:#4a4a4a;"></div>
<div style="left:1899px;top:562px;width:15px;height:14px;background:#4a4a4a;"></div>
<span class="tri up" style="left:1903px;top:266px"></span>
<span class="tri" style="left:1903px;top:567px;border-top-color:#f0f0f0"></span>
<div style="left:0;top:0;width:1920px;height:992px;clip-path:inset(260px 22px 414px 1485px)">
<span class="t" style="left:1529px;top:255.8px;font-size:12px;color:#f0f0f0;">All...</span>
<div style="left:1492px;top:258px;width:10px;height:9px;background:#e8e8e8;"></div>
<div style="left:1514px;top:268px;width:1px;height:300px;background:repeating-linear-gradient(#aaa 0 1px, transparent 1px 2px);"></div>
<div style="left:1526px;top:259px;width:29px;height:12px;background:transparent;border:1px solid #9a9a9a;border-top:none;box-sizing:border-box;"></div>
<div style="left:1502px;top:263px;width:12px;height:1px;background:repeating-linear-gradient(90deg,#aaa 0 1px, transparent 1px 2px);"></div>
<svg style="left:1512px;top:259px;" width="14" height="10" viewBox="0 0 14 10"><path d="M2 8 L8 2" stroke="#b03ab0" stroke-width="1.3"/><circle cx="9" cy="6" r="4" fill="#1a1a7a"/><path d="M9 2 V9" stroke="#9ab0ff" stroke-width="1"/></svg>
<span class="t" style="left:1548px;top:273.8px;font-size:12px;color:#f0f0f0;">Light</span>
<div style="left:1515px;top:280px;width:12px;height:1px;background:repeating-linear-gradient(90deg,#aaa 0 1px, transparent 1px 2px);"></div>
<svg style="left:1527px;top:272px;" width="14" height="16" viewBox="0 0 14 16"><path d="M3 9 L7 16 L11 9 Z" fill="#1a1a8a"/><path d="M7 1 V6 M2 4 L5 7 M12 4 L9 7 M1 8 H4 M10 8 H13" stroke="#5a6ad0" stroke-width="1"/></svg>
<span class="t" style="left:1548px;top:291.8px;font-size:12px;color:#f0f0f0;">Light</span>
<div style="left:1515px;top:298px;width:12px;height:1px;background:repeating-linear-gradient(90deg,#aaa 0 1px, transparent 1px 2px);"></div>
<svg style="left:1527px;top:290px;" width="14" height="16" viewBox="0 0 14 16"><path d="M3 9 L7 16 L11 9 Z" fill="#1a1a8a"/><path d="M7 1 V6 M2 4 L5 7 M12 4 L9 7 M1 8 H4 M10 8 H13" stroke="#5a6ad0" stroke-width="1"/></svg>
<span class="t" style="left:1548px;top:309.8px;font-size:12px;color:#f0f0f0;">Light</span>
<div style="left:1515px;top:316px;width:12px;height:1px;background:repeating-linear-gradient(90deg,#aaa 0 1px, transparent 1px 2px);"></div>
<svg style="left:1527px;top:308px;" width="14" height="16" viewBox="0 0 14 16"><path d="M3 9 L7 16 L11 9 Z" fill="#1a1a8a"/><path d="M7 1 V6 M2 4 L5 7 M12 4 L9 7 M1 8 H4 M10 8 H13" stroke="#5a6ad0" stroke-width="1"/></svg>
<span class="t" style="left:1548px;top:327.8px;font-size:12px;color:#f0f0f0;">Light</span>
<div style="left:1515px;top:334px;width:12px;height:1px;background:repeating-linear-gradient(90deg,#aaa 0 1px, transparent 1px 2px);"></div>
<svg style="left:1527px;top:326px;" width="14" height="16" viewBox="0 0 14 16"><path d="M3 9 L7 16 L11 9 Z" fill="#1a1a8a"/><path d="M7 1 V6 M2 4 L5 7 M12 4 L9 7 M1 8 H4 M10 8 H13" stroke="#5a6ad0" stroke-width="1"/></svg>
<span class="t" style="left:1548px;top:345.8px;font-size:12px;color:#f0f0f0;">Arc</span>
<div style="left:1515px;top:352px;width:12px;height:1px;background:repeating-linear-gradient(90deg,#aaa 0 1px, transparent 1px 2px);"></div>
<svg style="left:1527px;top:344px;" width="14" height="16" viewBox="0 0 14 16"><path d="M2 13 Q3 6 11 4" stroke="#1a1a8a" stroke-width="3" fill="none"/><rect x="9" y="2" width="2" height="2" fill="#c8d0ff"/><rect x="3" y="11" width="2" height="2" fill="#c8d0ff"/></svg>
<span class="t" style="left:1548px;top:363.8px;font-size:12px;color:#f0f0f0;">Line</span>
<div style="left:1515px;top:370px;width:12px;height:1px;background:repeating-linear-gradient(90deg,#aaa 0 1px, transparent 1px 2px);"></div>
<svg style="left:1527px;top:362px;" width="14" height="16" viewBox="0 0 14 16"><path d="M2 13 Q3 6 11 4" stroke="#1a1a8a" stroke-width="3" fill="none"/><rect x="9" y="2" width="2" height="2" fill="#c8d0ff"/><rect x="3" y="11" width="2" height="2" fill="#c8d0ff"/></svg>
<span class="t" style="left:1548px;top:381.8px;font-size:12px;color:#f0f0f0;">Arc</span>
<div style="left:1515px;top:388px;width:12px;height:1px;background:repeating-linear-gradient(90deg,#aaa 0 1px, transparent 1px 2px);"></div>
<svg style="left:1527px;top:380px;" width="14" height="16" viewBox="0 0 14 16"><path d="M2 13 Q3 6 11 4" stroke="#1a1a8a" stroke-width="3" fill="none"/><rect x="9" y="2" width="2" height="2" fill="#c8d0ff"/><rect x="3" y="11" width="2" height="2" fill="#c8d0ff"/></svg>
<span class="t" style="left:1548px;top:399.8px;font-size:12px;color:#f0f0f0;">Line</span>
<div style="left:1515px;top:406px;width:12px;height:1px;background:repeating-linear-gradient(90deg,#aaa 0 1px, transparent 1px 2px);"></div>
<svg style="left:1527px;top:398px;" width="14" height="16" viewBox="0 0 14 16"><path d="M2 13 Q3 6 11 4" stroke="#1a1a8a" stroke-width="3" fill="none"/><rect x="9" y="2" width="2" height="2" fill="#c8d0ff"/><rect x="3" y="11" width="2" height="2" fill="#c8d0ff"/></svg>
<span class="t" style="left:1548px;top:417.8px;font-size:12px;color:#f0f0f0;">Arc</span>
<div style="left:1515px;top:424px;width:12px;height:1px;background:repeating-linear-gradient(90deg,#aaa 0 1px, transparent 1px 2px);"></div>
<svg style="left:1527px;top:416px;" width="14" height="16" viewBox="0 0 14 16"><path d="M2 13 Q3 6 11 4" stroke="#1a1a8a" stroke-width="3" fill="none"/><rect x="9" y="2" width="2" height="2" fill="#c8d0ff"/><rect x="3" y="11" width="2" height="2" fill="#c8d0ff"/></svg>
<span class="t" style="left:1548px;top:435.8px;font-size:12px;color:#f0f0f0;">Line</span>
<div style="left:1515px;top:442px;width:12px;height:1px;background:repeating-linear-gradient(90deg,#aaa 0 1px, transparent 1px 2px);"></div>
<svg style="left:1527px;top:434px;" width="14" height="16" viewBox="0 0 14 16"><path d="M2 13 Q3 6 11 4" stroke="#1a1a8a" stroke-width="3" fill="none"/><rect x="9" y="2" width="2" height="2" fill="#c8d0ff"/><rect x="3" y="11" width="2" height="2" fill="#c8d0ff"/></svg>
<span class="t" style="left:1548px;top:453.8px;font-size:12px;color:#f0f0f0;">Arc</span>
<div style="left:1515px;top:460px;width:12px;height:1px;background:repeating-linear-gradient(90deg,#aaa 0 1px, transparent 1px 2px);"></div>
<svg style="left:1527px;top:452px;" width="14" height="16" viewBox="0 0 14 16"><path d="M2 13 Q3 6 11 4" stroke="#1a1a8a" stroke-width="3" fill="none"/><rect x="9" y="2" width="2" height="2" fill="#c8d0ff"/><rect x="3" y="11" width="2" height="2" fill="#c8d0ff"/></svg>
<span class="t" style="left:1548px;top:471.8px;font-size:12px;color:#f0f0f0;">Line</span>
<div style="left:1515px;top:478px;width:12px;height:1px;background:repeating-linear-gradient(90deg,#aaa 0 1px, transparent 1px 2px);"></div>
<svg style="left:1527px;top:470px;" width="14" height="16" viewBox="0 0 14 16"><path d="M2 13 Q3 6 11 4" stroke="#1a1a8a" stroke-width="3" fill="none"/><rect x="9" y="2" width="2" height="2" fill="#c8d0ff"/><rect x="3" y="11" width="2" height="2" fill="#c8d0ff"/></svg>
<span class="t" style="left:1548px;top:489.8px;font-size:12px;color:#f0f0f0;">Circle</span>
<div style="left:1515px;top:496px;width:12px;height:1px;background:repeating-linear-gradient(90deg,#aaa 0 1px, transparent 1px 2px);"></div>
<svg style="left:1527px;top:488px;" width="14" height="16" viewBox="0 0 14 16"><circle cx="7" cy="8" r="5.5" fill="none" stroke="#1a1a8a" stroke-width="2.5"/><rect x="6.5" y="6" width="1.5" height="1.5" fill="#c8d0ff"/><rect x="6.5" y="9" width="1.5" height="1.5" fill="#c8d0ff"/></svg>
<span class="t" style="left:1548px;top:507.8px;font-size:12px;color:#f0f0f0;">Circle</span>
<div style="left:1515px;top:514px;width:12px;height:1px;background:repeating-linear-gradient(90deg,#aaa 0 1px, transparent 1px 2px);"></div>
<svg style="left:1527px;top:506px;" width="14" height="16" viewBox="0 0 14 16"><circle cx="7" cy="8" r="5.5" fill="none" stroke="#1a1a8a" stroke-width="2.5"/><rect x="6.5" y="6" width="1.5" height="1.5" fill="#c8d0ff"/><rect x="6.5" y="9" width="1.5" height="1.5" fill="#c8d0ff"/></svg>
<span class="t" style="left:1548px;top:525.8px;font-size:12px;color:#f0f0f0;">Circle</span>
<div style="left:1515px;top:532px;width:12px;height:1px;background:repeating-linear-gradient(90deg,#aaa 0 1px, transparent 1px 2px);"></div>
<svg style="left:1527px;top:524px;" width="14" height="16" viewBox="0 0 14 16"><circle cx="7" cy="8" r="5.5" fill="none" stroke="#1a1a8a" stroke-width="2.5"/><rect x="6.5" y="6" width="1.5" height="1.5" fill="#c8d0ff"/><rect x="6.5" y="9" width="1.5" height="1.5" fill="#c8d0ff"/></svg>
<span class="t" style="left:1548px;top:543.8px;font-size:12px;color:#f0f0f0;">Circle</span>
<div style="left:1515px;top:550px;width:12px;height:1px;background:repeating-linear-gradient(90deg,#aaa 0 1px, transparent 1px 2px);"></div>
<svg style="left:1527px;top:542px;" width="14" height="16" viewBox="0 0 14 16"><circle cx="7" cy="8" r="5.5" fill="none" stroke="#1a1a8a" stroke-width="2.5"/><rect x="6.5" y="6" width="1.5" height="1.5" fill="#c8d0ff"/><rect x="6.5" y="9" width="1.5" height="1.5" fill="#c8d0ff"/></svg>
<span class="t" style="left:1548px;top:561.8px;font-size:12px;color:#f0f0f0;">Simple Extrude</span>
<div style="left:1515px;top:568px;width:12px;height:1px;background:repeating-linear-gradient(90deg,#aaa 0 1px, transparent 1px 2px);"></div>
<svg style="left:1527px;top:560px;" width="14" height="16" viewBox="0 0 14 16"><rect x="2" y="4" width="11" height="9" fill="#1a2aa0"/><path d="M4 8 L10 6 L10 11 L4 12 Z" fill="#9ab0ff"/></svg>
</div>
<div style="left:1483px;top:583px;width:68px;height:17px;background:#5a5a5a;"></div>
<span class="t" style="left:1490px;top:586.8px;font-size:12px;color:#f0f0f0;">Properties</span>
<div style="left:1551px;top:583px;width:71px;height:17px;background:#404040;border-top:1px solid #6a6a6a;box-sizing:border-box;"></div>
<span class="t" style="left:1556px;top:586.8px;font-size:12px;color:#9a9a9a;">Constraints</span>
<div style="left:1483px;top:600px;width:415px;height:17px;background:#5e5e5e;"></div>
<div style="left:1698px;top:600px;width:1px;height:17px;background:#3a3a3a;"></div>
<span class="t" style="left:1489px;top:602.8px;font-size:12px;color:#f0f0f0;">Property</span>
<span class="t" style="left:1705px;top:602.8px;font-size:12px;color:#f0f0f0;">Value</span>
<span class="t" style="left:1683px;top:602px;font-size:11px;color:#eee">&#9651;</span>
<div style="left:1483px;top:617px;width:415px;height:296px;background:#2a2a2a;"></div>
<div style="left:1483px;top:636px;width:415px;height:1px;background:#7c7c7c;"></div>
<span class="t" style="left:1507px;top:621.8px;font-size:12px;color:#f0f0f0;font-weight:bold;">General</span>
<svg style="left:1491px;top:622px;" width="10" height="10" viewBox="0 0 10 10"><rect x="0" y="0" width="10" height="10" fill="#e8e8e8"/><path d="M2 5 H8" stroke="#222" stroke-width="1.5"/><path d="M5 2 V8" stroke="#222" stroke-width="1.5"/></svg>
<div style="left:1501px;top:627px;width:5px;height:1px;background:repeating-linear-gradient(90deg,#aaa 0 1px, transparent 1px 2px);"></div>
<div style="left:1483px;top:656px;width:415px;height:1px;background:#7c7c7c;"></div>
<span class="t" style="left:1507px;top:641.8px;font-size:12px;color:#f0f0f0;font-weight:bold;">Pen</span>
<svg style="left:1491px;top:642px;" width="10" height="10" viewBox="0 0 10 10"><rect x="0" y="0" width="10" height="10" fill="#e8e8e8"/><path d="M2 5 H8" stroke="#222" stroke-width="1.5"/><path d="M5 2 V8" stroke="#222" stroke-width="1.5"/></svg>
<div style="left:1501px;top:647px;width:5px;height:1px;background:repeating-linear-gradient(90deg,#aaa 0 1px, transparent 1px 2px);"></div>
<div style="left:1483px;top:676px;width:415px;height:1px;background:#7c7c7c;"></div>
<span class="t" style="left:1507px;top:661.8px;font-size:12px;color:#f0f0f0;font-weight:bold;">3D</span>
<svg style="left:1491px;top:662px;" width="10" height="10" viewBox="0 0 10 10"><rect x="0" y="0" width="10" height="10" fill="#e8e8e8"/><path d="M2 5 H8" stroke="#222" stroke-width="1.5"/></svg>
<div style="left:1501px;top:667px;width:5px;height:1px;background:repeating-linear-gradient(90deg,#aaa 0 1px, transparent 1px 2px);"></div>
<div style="left:1483px;top:696px;width:415px;height:1px;background:#7c7c7c;"></div>
<span class="t" style="left:1526px;top:681.8px;font-size:12px;color:#f0f0f0;">Solid Mode</span>
<span class="t" style="left:1700px;top:680.8px;font-size:12px;color:#f0f0f0;">Solid</span>
<div style="left:1483px;top:716px;width:415px;height:1px;background:#7c7c7c;"></div>
<span class="t" style="left:1526px;top:701.8px;font-size:12px;color:#f0f0f0;">Material</span>
<span class="t" style="left:1700px;top:700.8px;font-size:12px;color:#f0f0f0;"></span>
<div style="left:1505px;top:718px;width:393px;height:19px;background:#8fb0e0;"></div>
<div style="left:1483px;top:736px;width:415px;height:1px;background:#7c7c7c;"></div>
<span class="t" style="left:1507px;top:721.8px;font-size:12px;color:#0a1a50;font-weight:bold;">Simple Extrude</span>
<svg style="left:1491px;top:722px;" width="10" height="10" viewBox="0 0 10 10"><rect x="0" y="0" width="10" height="10" fill="#e8e8e8"/><path d="M2 5 H8" stroke="#222" stroke-width="1.5"/></svg>
<div style="left:1501px;top:727px;width:5px;height:1px;background:repeating-linear-gradient(90deg,#aaa 0 1px, transparent 1px 2px);"></div>
<div style="left:1483px;top:756px;width:415px;height:1px;background:#7c7c7c;"></div>
<span class="t" style="left:1526px;top:741.8px;font-size:12px;color:#f0f0f0;">Draft in (out) angle</span>
<span class="t" style="left:1700px;top:740.8px;font-size:12px;color:#f0f0f0;">0</span>
<div style="left:1483px;top:776px;width:415px;height:1px;background:#7c7c7c;"></div>
<span class="t" style="left:1526px;top:761.8px;font-size:12px;color:#f0f0f0;">Start offset distance</span>
<span class="t" style="left:1700px;top:760.8px;font-size:12px;color:#f0f0f0;">0 in</span>
<div style="left:1483px;top:796px;width:415px;height:1px;background:#7c7c7c;"></div>
<span class="t" style="left:1526px;top:781.8px;font-size:12px;color:#f0f0f0;">End offset distance</span>
<span class="t" style="left:1700px;top:780.8px;font-size:12px;color:#f0f0f0;">0 in</span>
<div style="left:1483px;top:816px;width:415px;height:1px;background:#7c7c7c;"></div>
<span class="t" style="left:1526px;top:801.8px;font-size:12px;color:#f0f0f0;">Height</span>
<span class="t" style="left:1700px;top:800.8px;font-size:12px;color:#f0f0f0;">-1.656857 in</span>
<div style="left:1483px;top:836px;width:415px;height:1px;background:#7c7c7c;"></div>
<span class="t" style="left:1526px;top:821.8px;font-size:12px;color:#f0f0f0;">Direction</span>
<span class="t" style="left:1700px;top:820.8px;font-size:12px;color:#f0f0f0;">One Side</span>
<div style="left:1483px;top:856px;width:415px;height:1px;background:#7c7c7c;"></div>
<span class="t" style="left:1526px;top:841.8px;font-size:12px;color:#f0f0f0;">Offset</span>
<span class="t" style="left:1700px;top:840.8px;font-size:12px;color:#f0f0f0;">0 in</span>
<div style="left:1483px;top:876px;width:415px;height:1px;background:#7c7c7c;"></div>
<span class="t" style="left:1507px;top:861.8px;font-size:12px;color:#f0f0f0;font-weight:bold;">Metrics</span>
<svg style="left:1491px;top:862px;" width="10" height="10" viewBox="0 0 10 10"><rect x="0" y="0" width="10" height="10" fill="#e8e8e8"/><path d="M2 5 H8" stroke="#222" stroke-width="1.5"/></svg>
<div style="left:1501px;top:867px;width:5px;height:1px;background:repeating-linear-gradient(90deg,#aaa 0 1px, transparent 1px 2px);"></div>
<div style="left:1483px;top:896px;width:415px;height:1px;background:#7c7c7c;"></div>
<span class="t" style="left:1526px;top:881.8px;font-size:12px;color:#f0f0f0;">Object type</span>
<span class="t" style="left:1700px;top:880.8px;font-size:12px;color:#9a9a9a;">Simple Extrude</span>
<div style="left:1483px;top:916px;width:415px;height:1px;background:#7c7c7c;"></div>
<span class="t" style="left:1526px;top:901.8px;font-size:12px;color:#f0f0f0;">Extents Size</span>
<span class="t" style="left:1700px;top:900.8px;font-size:12px;color:#9a9a9a;">8.729459 in</span>
<div style="left:1698px;top:617px;width:1px;height:296px;background:#7c7c7c;"></div>
<div style="left:1495px;top:632px;width:1px;height:240px;background:repeating-linear-gradient(#aaa 0 1px, transparent 1px 2px);"></div>
<div style="left:1514px;top:677px;width:1px;height:20px;background:repeating-linear-gradient(#aaa 0 1px, transparent 1px 2px);"></div>
<div style="left:1515px;top:687px;width:9px;height:1px;background:repeating-linear-gradient(90deg,#aaa 0 1px, transparent 1px 2px);"></div>
<div style="left:1514px;top:697px;width:1px;height:10px;background:repeating-linear-gradient(#aaa 0 1px, transparent 1px 2px);"></div>
<div style="left:1515px;top:707px;width:9px;height:1px;background:repeating-linear-gradient(90deg,#aaa 0 1px, transparent 1px 2px);"></div>
<div style="left:1514px;top:737px;width:1px;height:20px;background:repeating-linear-gradient(#aaa 0 1px, transparent 1px 2px);"></div>
<div style="left:1515px;top:747px;width:9px;height:1px;background:repeating-linear-gradient(90deg,#aaa 0 1px, transparent 1px 2px);"></div>
<div style="left:1514px;top:757px;width:1px;height:20px;background:repeating-linear-gradient(#aaa 0 1px, transparent 1px 2px);"></div>
<div style="left:1515px;top:767px;width:9px;height:1px;background:repeating-linear-gradient(90deg,#aaa 0 1px, transparent 1px 2px);"></div>
<div style="left:1514px;top:777px;width:1px;height:20px;background:repeating-linear-gradient(#aaa 0 1px, transparent 1px 2px);"></div>
<div style="left:1515px;top:787px;width:9px;height:1px;background:repeating-linear-gradient(90deg,#aaa 0 1px, transparent 1px 2px);"></div>
<div style="left:1514px;top:797px;width:1px;height:20px;background:repeating-linear-gradient(#aaa 0 1px, transparent 1px 2px);"></div>
<div style="left:1515px;top:807px;width:9px;height:1px;background:repeating-linear-gradient(90deg,#aaa 0 1px, transparent 1px 2px);"></div>
<div style="left:1514px;top:817px;width:1px;height:20px;background:repeating-linear-gradient(#aaa 0 1px, transparent 1px 2px);"></div>
<div style="left:1515px;top:827px;width:9px;height:1px;background:repeating-linear-gradient(90deg,#aaa 0 1px, transparent 1px 2px);"></div>
<div style="left:1514px;top:837px;width:1px;height:10px;background:repeating-linear-gradient(#aaa 0 1px, transparent 1px 2px);"></div>
<div style="left:1515px;top:847px;width:9px;height:1px;background:repeating-linear-gradient(90deg,#aaa 0 1px, transparent 1px 2px);"></div>
<div style="left:1514px;top:877px;width:1px;height:20px;background:repeating-linear-gradient(#aaa 0 1px, transparent 1px 2px);"></div>
<div style="left:1515px;top:887px;width:9px;height:1px;background:repeating-linear-gradient(90deg,#aaa 0 1px, transparent 1px 2px);"></div>
<div style="left:1514px;top:897px;width:1px;height:10px;background:repeating-linear-gradient(#aaa 0 1px, transparent 1px 2px);"></div>
<div style="left:1515px;top:907px;width:9px;height:1px;background:repeating-linear-gradient(90deg,#aaa 0 1px, transparent 1px 2px);"></div>
<div style="left:1898px;top:617px;width:17px;height:296px;background:#3a3a3a;"></div>
<div style="left:1899px;top:617px;width:15px;height:295px;background:#6e6e6e;"></div>
<div style="left:1899px;top:617px;width:15px;height:17px;background:#4e4e4e;"></div>
<div style="left:1899px;top:634px;width:15px;height:17px;background:#585858;"></div>
<div style="left:1899px;top:896px;width:15px;height:17px;background:#4e4e4e;"></div>
<span class="tri up" style="left:1903px;top:623px"></span>
<span class="tri" style="left:1903px;top:901px;border-top-color:#f0f0f0"></span>
<div style="left:1483px;top:915px;width:432px;height:31px;background:#2a2a2a;"></div>
<span class="t" style="left:1487px;top:916.8px;font-size:12px;color:#f0f0f0;">11 of 17 selected:</span>
<!--STATUS-->
<div style="left:0px;top:951px;width:1920px;height:41px;background:#4d4d4d;border-top:1px solid #6a6a6a;box-sizing:border-box;"></div>
<div style="left:6px;top:957px;width:2px;height:2px;background:#8a8a8a;"></div>
<div style="left:6px;top:961px;width:2px;height:2px;background:#8a8a8a;"></div>
<div style="left:6px;top:965px;width:2px;height:2px;background:#8a8a8a;"></div>
<div style="left:6px;top:969px;width:2px;height:2px;background:#8a8a8a;"></div>
<div style="left:6px;top:973px;width:2px;height:2px;background:#8a8a8a;"></div>
<div style="left:6px;top:977px;width:2px;height:2px;background:#8a8a8a;"></div>
<div style="left:6px;top:981px;width:2px;height:2px;background:#8a8a8a;"></div>
<div style="left:6px;top:985px;width:2px;height:2px;background:#8a8a8a;"></div>
<div style="left:6px;top:989px;width:2px;height:2px;background:#8a8a8a;"></div>
<div style="left:11px;top:958px;width:26px;height:27px;background:#6a8cba;"></div>
<svg style="left:12px;top:960px;" width="24" height="24" viewBox="0 0 24 24"><path d="M2 12 Q3 5 8 8 Q6 14 12 16 Q10 21 5 20 Q2 18 2 12 Z" fill="#c83a3a"/><circle cx="6" cy="12" r="2" fill="#f0a080"/><rect x="9" y="17" width="4" height="2.5" fill="#f08080"/><path d="M8 6 L12 10" stroke="#80f080" stroke-width="2"/><path d="M12 10 L19 17" stroke="#c8d8f0" stroke-width="1.2"/><g fill="#f4f4f4"><rect x="13" y="3" width="3.5" height="3.5" transform="rotate(45 14.75 4.75)"/><rect x="18" y="3" width="3.5" height="3.5" transform="rotate(45 19.75 4.75)"/><rect x="13" y="8" width="3.5" height="3.5" transform="rotate(45 14.75 9.75)"/><rect x="18" y="8" width="3.5" height="3.5" transform="rotate(45 19.75 9.75)"/></g></svg>
<svg style="left:42px;top:961px;" width="20" height="20" viewBox="0 0 20 20"><path d="M3 3 L17 17 M17 3 L3 17" stroke="#c82020" stroke-width="3.5"/></svg>
<svg style="left:70px;top:962px;" width="20" height="18" viewBox="0 0 20 18"><rect x="0.7" y="0.7" width="18.6" height="16.6" fill="#1a2a50" stroke="#c8d8f0" stroke-width="1.2"/><rect x="1" y="1" width="18" height="3" fill="#8ab0e0"/><g fill="#e8e8e8"><rect x="2.5" y="5.5" width="4.5" height="2"/><rect x="8" y="5.5" width="4.5" height="2"/><rect x="13.5" y="5.5" width="4.5" height="2"/><rect x="2.5" y="9" width="4.5" height="2"/><rect x="8" y="9" width="4.5" height="2"/><rect x="13.5" y="9" width="4.5" height="2"/><rect x="2.5" y="12.5" width="4.5" height="2"/><rect x="8" y="12.5" width="4.5" height="2"/><rect x="13.5" y="12.5" width="4.5" height="2"/></g></svg>
<div style="left:97px;top:956px;width:1px;height:32px;background:#777;"></div>
<div style="left:102px;top:955px;width:66px;height:15px;overflow:hidden"><span class="t" style="left:0;top:1.8px;font-size:12px;color:#f0f0f0">Scale X</span></div>
<div style="left:103px;top:969px;width:68px;height:20px;background:#262626;border:1px solid #808080;box-sizing:border-box;overflow:hidden"><span class="t" style="left:3px;top:4.3px;font-size:12px;color:#f0f0f0">1</span></div>
<div style="left:154px;top:970px;width:15px;height:18px;background:#3e3e3e;border:1px solid #5a5a5a;box-sizing:border-box;"></div>
<span class="tri up s" style="left:159px;top:974px;border-width:0 2.5px 2.5px 2.5px;border-bottom-color:#ddd"></span>
<span class="tri s" style="left:159px;top:982px;border-width:2.5px 2.5px 0 2.5px;border-top-color:#ddd"></span>
<div style="left:173px;top:955px;width:66px;height:15px;overflow:hidden"><span class="t" style="left:0;top:1.8px;font-size:12px;color:#f0f0f0">Scale Y</span></div>
<div style="left:174px;top:969px;width:68px;height:20px;background:#262626;border:1px solid #808080;box-sizing:border-box;overflow:hidden"><span class="t" style="left:3px;top:4.3px;font-size:12px;color:#f0f0f0">1</span></div>
<div style="left:225px;top:970px;width:15px;height:18px;background:#3e3e3e;border:1px solid #5a5a5a;box-sizing:border-box;"></div>
<span class="tri up s" style="left:230px;top:974px;border-width:0 2.5px 2.5px 2.5px;border-bottom-color:#ddd"></span>
<span class="tri s" style="left:230px;top:982px;border-width:2.5px 2.5px 0 2.5px;border-top-color:#ddd"></span>
<div style="left:244px;top:955px;width:66px;height:15px;overflow:hidden"><span class="t" style="left:0;top:1.8px;font-size:12px;color:#f0f0f0">Scale Z</span></div>
<div style="left:245px;top:969px;width:68px;height:20px;background:#262626;border:1px solid #808080;box-sizing:border-box;overflow:hidden"><span class="t" style="left:3px;top:4.3px;font-size:12px;color:#f0f0f0">1</span></div>
<div style="left:296px;top:970px;width:15px;height:18px;background:#3e3e3e;border:1px solid #5a5a5a;box-sizing:border-box;"></div>
<span class="tri up s" style="left:301px;top:974px;border-width:0 2.5px 2.5px 2.5px;border-bottom-color:#ddd"></span>
<span class="tri s" style="left:301px;top:982px;border-width:2.5px 2.5px 0 2.5px;border-top-color:#ddd"></span>
<div style="left:315px;top:955px;width:66px;height:15px;overflow:hidden"><span class="t" style="left:0;top:1.8px;font-size:12px;color:#f0f0f0">Size X</span></div>
<div style="left:316px;top:969px;width:68px;height:20px;background:#262626;border:1px solid #808080;box-sizing:border-box;overflow:hidden"><span class="t" style="left:3px;top:4.3px;font-size:12px;color:#f0f0f0">7.799886 in</span></div>
<div style="left:386px;top:955px;width:66px;height:15px;overflow:hidden"><span class="t" style="left:0;top:1.8px;font-size:12px;color:#f0f0f0">Size Y</span></div>
<div style="left:387px;top:969px;width:68px;height:20px;background:#262626;border:1px solid #808080;box-sizing:border-box;overflow:hidden"><span class="t" style="left:3px;top:4.3px;font-size:12px;color:#f0f0f0">3.552471 in</span></div>
<div style="left:457px;top:955px;width:66px;height:15px;overflow:hidden"><span class="t" style="left:0;top:1.8px;font-size:12px;color:#f0f0f0">Size Z</span></div>
<div style="left:458px;top:969px;width:68px;height:20px;background:#262626;border:1px solid #808080;box-sizing:border-box;overflow:hidden"><span class="t" style="left:3px;top:4.3px;font-size:12px;color:#f0f0f0">1.656857 in</span></div>
<div style="left:528px;top:955px;width:66px;height:15px;overflow:hidden"><span class="t" style="left:0;top:1.8px;font-size:12px;color:#f0f0f0">Pos X</span></div>
<div style="left:529px;top:969px;width:68px;height:20px;background:#262626;border:1px solid #808080;box-sizing:border-box;overflow:hidden"><span class="t" style="left:3px;top:4.3px;font-size:12px;color:#f0f0f0">15.484391 in</span></div>
<div style="left:599px;top:955px;width:66px;height:15px;overflow:hidden"><span class="t" style="left:0;top:1.8px;font-size:12px;color:#f0f0f0">Pos Y</span></div>
<div style="left:600px;top:969px;width:68px;height:20px;background:#262626;border:1px solid #808080;box-sizing:border-box;overflow:hidden"><span class="t" style="left:3px;top:4.3px;font-size:12px;color:#f0f0f0">3.039088 in</span></div>
<div style="left:670px;top:955px;width:66px;height:15px;overflow:hidden"><span class="t" style="left:0;top:1.8px;font-size:12px;color:#f0f0f0">Pos Z</span></div>
<div style="left:671px;top:969px;width:68px;height:20px;background:#262626;border:1px solid #808080;box-sizing:border-box;overflow:hidden"><span class="t" style="left:3px;top:4.3px;font-size:12px;color:#f0f0f0">-0.828429 in</span></div>
<div style="left:741px;top:955px;width:66px;height:15px;overflow:hidden"><span class="t" style="left:0;top:1.8px;font-size:12px;color:#f0f0f0">Delta X</span></div>
<div style="left:742px;top:969px;width:68px;height:20px;background:#262626;border:1px solid #808080;box-sizing:border-box;overflow:hidden"><span class="t" style="left:3px;top:4.3px;font-size:12px;color:#f0f0f0">0 in</span></div>
<div style="left:812px;top:955px;width:66px;height:15px;overflow:hidden"><span class="t" style="left:0;top:1.8px;font-size:12px;color:#f0f0f0">Delta Y</span></div>
<div style="left:813px;top:969px;width:68px;height:20px;background:#262626;border:1px solid #808080;box-sizing:border-box;overflow:hidden"><span class="t" style="left:3px;top:4.3px;font-size:12px;color:#f0f0f0">0 in</span></div>
<div style="left:883px;top:955px;width:66px;height:15px;overflow:hidden"><span class="t" style="left:0;top:1.8px;font-size:12px;color:#f0f0f0">Delta Z</span></div>
<div style="left:884px;top:969px;width:68px;height:20px;background:#262626;border:1px solid #808080;box-sizing:border-box;overflow:hidden"><span class="t" style="left:3px;top:4.3px;font-size:12px;color:#f0f0f0">0 in</span></div>
<div style="left:954px;top:955px;width:66px;height:15px;overflow:hidden"><span class="t" style="left:0;top:1.8px;font-size:12px;color:#f0f0f0">Rot X</span></div>
<div style="left:955px;top:969px;width:68px;height:20px;background:#262626;border:1px solid #808080;box-sizing:border-box;overflow:hidden"><span class="t" style="left:3px;top:4.3px;font-size:12px;color:#f0f0f0">0</span></div>
<div style="left:1006px;top:970px;width:15px;height:18px;background:#3e3e3e;border:1px solid #5a5a5a;box-sizing:border-box;"></div>
<span class="tri up s" style="left:1011px;top:974px;border-width:0 2.5px 2.5px 2.5px;border-bottom-color:#ddd"></span>
<span class="tri s" style="left:1011px;top:982px;border-width:2.5px 2.5px 0 2.5px;border-top-color:#ddd"></span>
<div style="left:1025px;top:955px;width:66px;height:15px;overflow:hidden"><span class="t" style="left:0;top:1.8px;font-size:12px;color:#f0f0f0">Rot Y</span></div>
<div style="left:1026px;top:969px;width:68px;height:20px;background:#262626;border:1px solid #808080;box-sizing:border-box;overflow:hidden"><span class="t" style="left:3px;top:4.3px;font-size:12px;color:#f0f0f0">0</span></div>
<div style="left:1077px;top:970px;width:15px;height:18px;background:#3e3e3e;border:1px solid #5a5a5a;box-sizing:border-box;"></div>
<span class="tri up s" style="left:1082px;top:974px;border-width:0 2.5px 2.5px 2.5px;border-bottom-color:#ddd"></span>
<span class="tri s" style="left:1082px;top:982px;border-width:2.5px 2.5px 0 2.5px;border-top-color:#ddd"></span>
<div style="left:1096px;top:955px;width:66px;height:15px;overflow:hidden"><span class="t" style="left:0;top:1.8px;font-size:12px;color:#f0f0f0">Rot Z</span></div>
<div style="left:1097px;top:969px;width:68px;height:20px;background:#262626;border:1px solid #808080;box-sizing:border-box;overflow:hidden"><span class="t" style="left:3px;top:4.3px;font-size:12px;color:#f0f0f0">0</span></div>
<div style="left:1148px;top:970px;width:15px;height:18px;background:#3e3e3e;border:1px solid #5a5a5a;box-sizing:border-box;"></div>
<span class="tri up s" style="left:1153px;top:974px;border-width:0 2.5px 2.5px 2.5px;border-bottom-color:#ddd"></span>
<span class="tri s" style="left:1153px;top:982px;border-width:2.5px 2.5px 0 2.5px;border-top-color:#ddd"></span>
<div style="left:1167px;top:955px;width:66px;height:15px;overflow:hidden"><span class="t" style="left:0;top:1.8px;font-size:12px;color:#f0f0f0">Delta Distanc</span></div>
<div style="left:1168px;top:969px;width:68px;height:20px;background:#262626;border:1px solid #808080;box-sizing:border-box;overflow:hidden"><span class="t" style="left:3px;top:4.3px;font-size:12px;color:#f0f0f0">0 in</span></div>
<div style="left:1238px;top:955px;width:66px;height:15px;overflow:hidden"><span class="t" style="left:0;top:1.8px;font-size:12px;color:#f0f0f0">Delta Angle</span></div>
<div style="left:1239px;top:969px;width:68px;height:20px;background:#262626;border:1px solid #808080;box-sizing:border-box;overflow:hidden"><span class="t" style="left:3px;top:4.3px;font-size:12px;color:#f0f0f0">0</span></div>
<div style="left:1290px;top:970px;width:15px;height:18px;background:#3e3e3e;border:1px solid #5a5a5a;box-sizing:border-box;"></div>
<span class="tri up s" style="left:1295px;top:974px;border-width:0 2.5px 2.5px 2.5px;border-bottom-color:#ddd"></span>
<span class="tri s" style="left:1295px;top:982px;border-width:2.5px 2.5px 0 2.5px;border-top-color:#ddd"></span>
<div style="left:1310px;top:956px;width:1px;height:32px;background:#777;"></div>
<div style="left:1401px;top:956px;width:1px;height:32px;background:#777;"></div>
<div style="left:1404px;top:959px;width:26px;height:26px;background:#6a8cba;"></div>
<svg style="left:1317px;top:962px;" width="20" height="20" viewBox="0 0 20 20"><path d="M3 9 L7 5 L17 5 L17 11 L13 15" fill="none" stroke="#f0f0f0" stroke-width="1.4"/><rect x="2" y="9" width="9" height="8" fill="none" stroke="#f0f0f0" stroke-width="1.4"/><path d="M2 9 L6 5 M11 9 L15 5" stroke="#f0f0f0" stroke-width="1.2"/></svg>
<svg style="left:1345px;top:962px;" width="20" height="20" viewBox="0 0 20 20"><rect x="2" y="2" width="6" height="6" fill="none" stroke="#f0f0f0" stroke-width="1.3"/><rect x="9" y="10" width="8" height="8" fill="none" stroke="#f0f0f0" stroke-width="1.3"/><path d="M4 18 L16 3" stroke="#a8a8a8" stroke-width="1.2"/></svg>
<svg style="left:1373px;top:962px;" width="20" height="20" viewBox="0 0 20 20"><path d="M3 13 Q5 5 12 7 L16 2" stroke="#c8d8f0" stroke-width="1.4" fill="none"/><path d="M10 9 L10 19 L12 17 L14 20 L15.5 19 L13.5 16 L16 16 Z" fill="#f0f0f0"/></svg>
<svg style="left:1407px;top:962px;" width="20" height="20" viewBox="0 0 20 20"><rect x="2" y="3" width="16" height="14" fill="#2a6a8a" stroke="#f0f0f0" stroke-width="1.3"/><path d="M5 3 L18 3 L18 16 Z" fill="#20e020"/></svg>
<svg style="left:1435px;top:962px;" width="20" height="20" viewBox="0 0 20 20"><path d="M2 3 L2 18 L18 18 Z" fill="#2a7a8a" stroke="#f0f0f0" stroke-width="1.3"/><rect x="10" y="2" width="8" height="5" fill="none" stroke="#f0f0f0" stroke-width="1.1"/></svg>
<svg style="left:1462px;top:962px;" width="20" height="20" viewBox="0 0 20 20"><path d="M2 3 L2 18 L18 18 Z" fill="#20e020" stroke="#f0f0f0" stroke-width="1.3" stroke-dasharray="2,1"/><rect x="10" y="2" width="7" height="6" fill="#ddd" stroke="#f0f0f0" stroke-width="1"/></svg>
<svg style="left:1490px;top:962px;" width="20" height="20" viewBox="0 0 20 20"><path d="M2 6 H11 V11 H16 V18 H7 V13 H2 Z" fill="#108a10" stroke="#f0f0f0" stroke-width="1.3"/><rect x="13" y="2" width="4" height="6" fill="#ddd"/></svg>
<svg style="left:1525px;top:962px;" width="20" height="20" viewBox="0 0 20 20"><path d="M3 8 Q6 2 12 4 Q17 7 14 12" stroke="#50c850" stroke-width="2.5" fill="none"/><path d="M1 4 L8 4 L8 11 Z" fill="#50c850"/><path d="M10 10 L10 19 L12 17 L14 20 L15.5 19 L13.5 16 L16 16 Z" fill="#f0f0f0"/></svg>
<svg style="left:1553px;top:962px;" width="20" height="20" viewBox="0 0 20 20"><path d="M4 6 L10 3 L14 8 L8 11 Z" fill="#c82a2a"/><path d="M9 11 L15 16" stroke="#c8d8f0" stroke-width="1.2"/><rect x="5" y="13" width="7" height="5" fill="#7a9ad0"/><path d="M2 2 L5 5 M15 12 L18 15" stroke="#f0f0f0" stroke-width="1"/></svg>
<svg style="left:1581px;top:962px;" width="20" height="20" viewBox="0 0 20 20"><path d="M9 3 L15 16 L3 16 Z" fill="none" stroke="#f0f0f0" stroke-width="1.6"/><path d="M11 8 L18 12 L14 19 L7 17 Z" fill="#b81818" opacity=".9"/><path d="M9 3 L15 16 L3 16 Z" fill="none" stroke="#f0f0f0" stroke-width="1.6"/></svg>
<svg style="left:1609px;top:962px;" width="20" height="20" viewBox="0 0 20 20"><rect x="6" y="2" width="8" height="6" fill="none" stroke="#f0f0f0" stroke-width="1.3"/><path d="M2 11 H18 V17 H2 Z" fill="none" stroke="#f0f0f0" stroke-width="1.3"/><path d="M7 11 L10 14 L13 11" stroke="#f0f0f0" stroke-width="1.3" fill="none"/></svg>
<svg style="left:1637px;top:962px;" width="20" height="20" viewBox="0 0 20 20"><rect x="3" y="3" width="14" height="14" fill="none" stroke="#d8d8d8" stroke-width="1.3"/><path d="M4 16 L16 4" stroke="#b02a4a" stroke-width="2"/><g fill="#9ab8e8"><circle cx="3" cy="3" r="1.8"/><circle cx="17" cy="3" r="1.8"/><circle cx="3" cy="17" r="1.8"/><circle cx="17" cy="17" r="1.8"/></g><rect x="5" y="10" width="5" height="6" fill="none" stroke="#f0f0f0" stroke-width="1"/></svg>
<svg style="left:1665px;top:962px;" width="20" height="20" viewBox="0 0 20 20"><rect x="3" y="3" width="14" height="14" fill="#b81818" stroke="#f0f0f0" stroke-width="1.3"/><rect x="7.5" y="7.5" width="5" height="5" fill="#f0d0a0"/><g fill="#9ab8e8"><rect x="1" y="1" width="4" height="4"/><rect x="15" y="1" width="4" height="4"/><rect x="1" y="15" width="4" height="4"/><rect x="15" y="15" width="4" height="4"/></g></svg>
<svg style="left:1692px;top:962px;" width="20" height="20" viewBox="0 0 20 20"><rect x="3" y="6" width="11" height="11" fill="none" stroke="#a8a8a8" stroke-width="1.6"/><circle cx="8.5" cy="11.5" r="2.5" fill="#a8a8a8"/><path d="M10 6 Q11 2 17 3" stroke="#a8a8a8" stroke-width="1.5" fill="none"/><rect x="15" y="1" width="4" height="4" fill="#a8a8a8"/></svg>
<svg style="left:1720px;top:962px;" width="20" height="20" viewBox="0 0 20 20"><rect x="3" y="8" width="10" height="9" fill="none" stroke="#a8a8a8" stroke-width="1.6"/><path d="M6 14 L16 4" stroke="#a8a8a8" stroke-width="1.4"/><rect x="14" y="2" width="4" height="4" fill="#a8a8a8"/><path d="M15 10 L18 13" stroke="#a8a8a8" stroke-width="1.3"/></svg>
<svg style="left:1748px;top:962px;" width="20" height="20" viewBox="0 0 20 20"><path d="M2 8 L6 3 H14 L10 8 Z" fill="#fff" stroke="#f0f0f0" stroke-width="1"/><path d="M4 6 L7 4 H12 L9 7 Z" fill="#222"/><circle cx="14" cy="9" r="3" fill="#b81818"/><rect x="7" y="12" width="7" height="6" fill="none" stroke="#f0f0f0" stroke-width="1.3"/></svg>
<svg style="left:1776px;top:962px;" width="20" height="20" viewBox="0 0 20 20"><path d="M6 8 L10 3 H18 L14 8 Z" fill="#fff" stroke="#f0f0f0" stroke-width="1"/><path d="M8 6 L11 4 H16 L13 7 Z" fill="#222"/><circle cx="12" cy="10" r="3" fill="#b81818"/><rect x="2" y="12" width="7" height="6" fill="none" stroke="#f0f0f0" stroke-width="1.3"/></svg>
<svg style="left:1804px;top:962px;" width="20" height="20" viewBox="0 0 20 20"><rect x="2" y="9" width="9" height="9" fill="none" stroke="#a8a8a8" stroke-width="1.5"/><rect x="5" y="2" width="4" height="5" fill="#a8a8a8"/><path d="M7 7 V12 H14" stroke="#a8a8a8" stroke-width="1.3" fill="none"/><rect x="13" y="8" width="6" height="6" rx="1" fill="#a8a8a8"/><path d="M14 8 V5 A2 2 0 0 1 18 5 V8" stroke="#a8a8a8" stroke-width="1.2" fill="none"/></svg>
<svg style="left:1832px;top:962px;" width="20" height="20" viewBox="0 0 20 20"><path d="M2 10 L7 5 V15 Z M18 10 L13 5 V15 Z" fill="#f0f0f0"/><rect x="8" y="7" width="4" height="6" fill="#8a2a2a"/></svg>
<svg style="left:1860px;top:962px;" width="20" height="20" viewBox="0 0 20 20"><path d="M3 9 V17 H17 V4" stroke="#f0f0f0" stroke-width="1.5" fill="none"/><g fill="#9ab8e8"><rect x="1" y="15" width="4" height="4"/><rect x="15" y="15" width="4" height="4"/><rect x="15" y="2" width="4" height="4"/><rect x="1" y="7" width="4" height="4"/></g><path d="M6 10 L14 5" stroke="#b81818" stroke-width="1.5"/></svg>
<svg style="left:1888px;top:962px;" width="20" height="20" viewBox="0 0 20 20"><rect x="3" y="3" width="14" height="14" fill="#3a5aa0" stroke="#d8d8d8" stroke-width="1.3"/><circle cx="10" cy="10" r="4.5" fill="#8a2a3a"/><path d="M3 17 L17 3" stroke="#e04a6a" stroke-width="1.3"/><g fill="#c8c8c8"><circle cx="3" cy="3" r="1.8"/><circle cx="17" cy="3" r="1.8"/><circle cx="3" cy="17" r="1.8"/><circle cx="17" cy="17" r="1.8"/></g></svg>
<div style="left:1518px;top:956px;width:1px;height:32px;background:#777;"></div>
</body></html>
